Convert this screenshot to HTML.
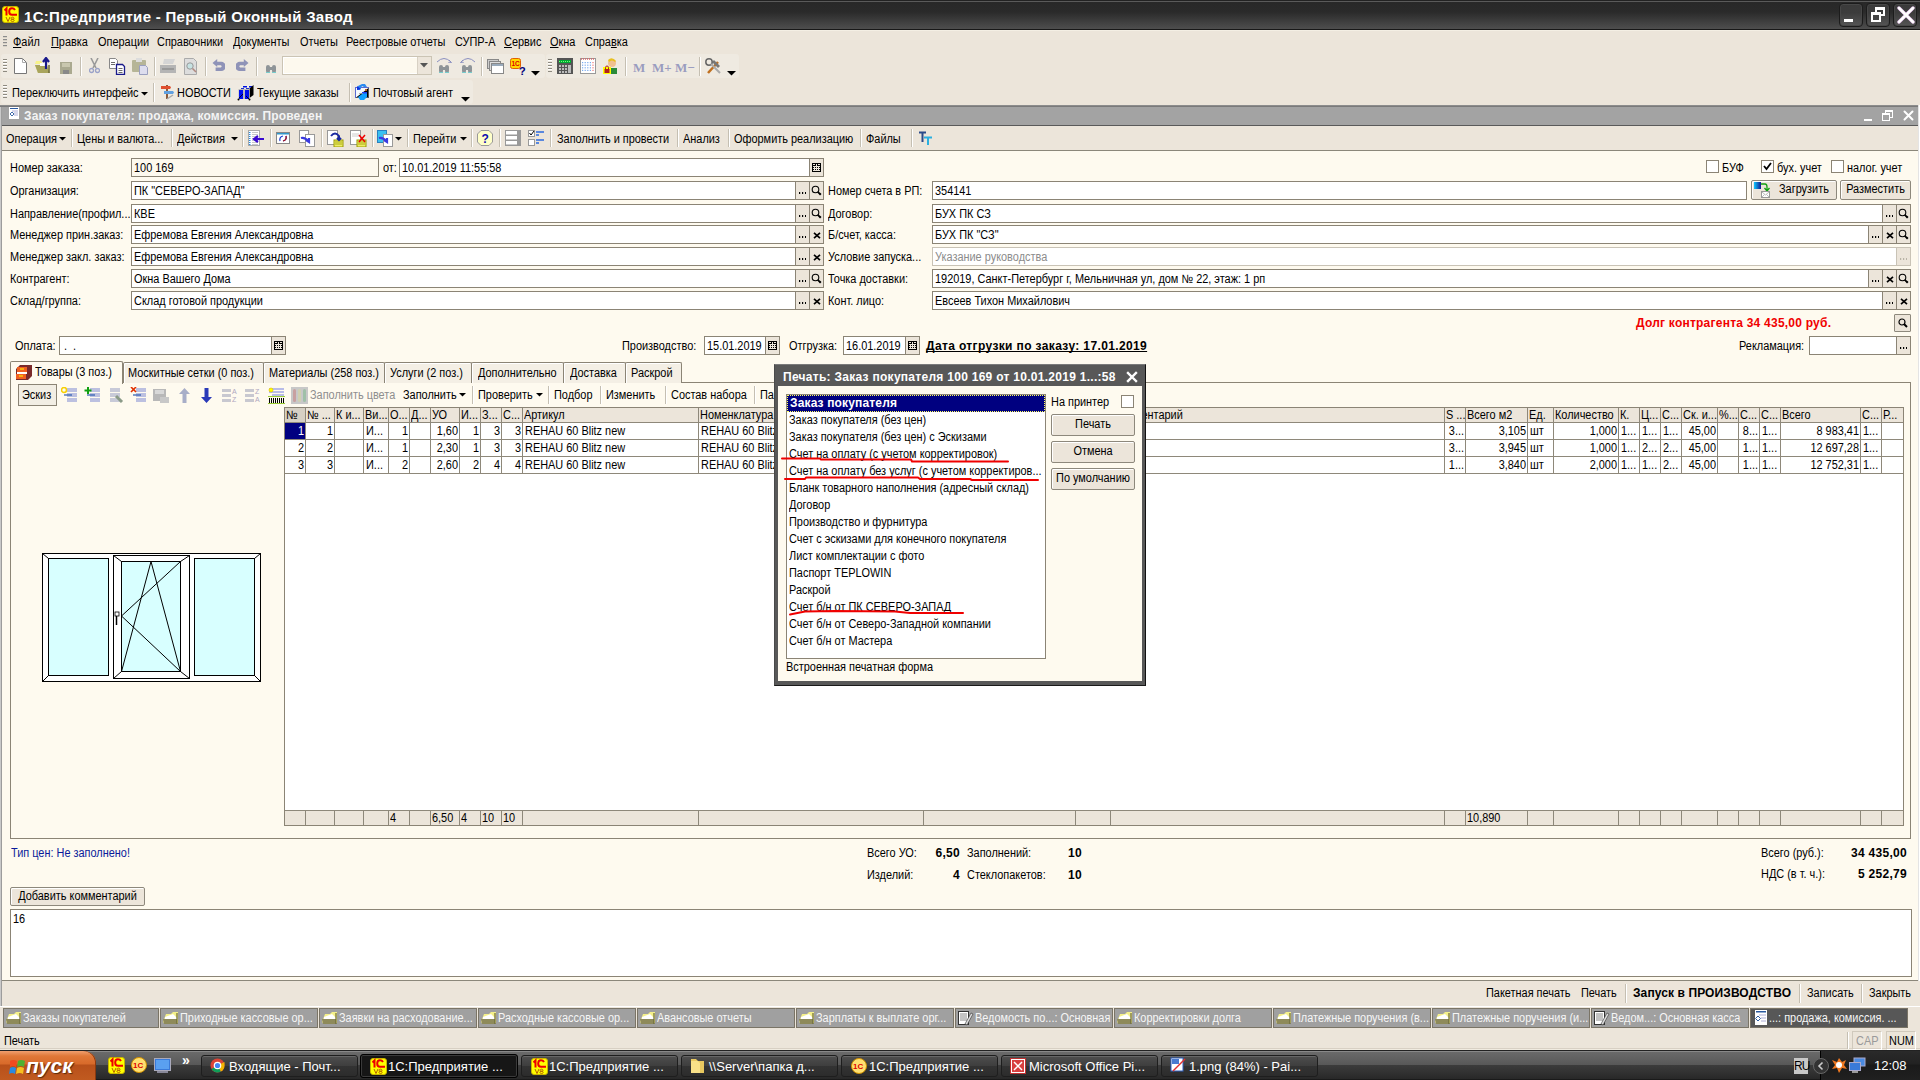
<!DOCTYPE html><html><head><meta charset="utf-8"><style>
*{margin:0;padding:0;box-sizing:border-box}
html,body{width:1920px;height:1080px;overflow:hidden;background:#ECE5DA;font-family:"Liberation Sans", sans-serif;font-size:11px;color:#000}
.a{position:absolute}
.t{position:absolute;white-space:nowrap;line-height:15px;font-size:12px;transform:scaleX(0.91);transform-origin:0 0}
.b{position:absolute;white-space:nowrap;line-height:15px;font-size:12px;font-weight:bold;letter-spacing:0.3px}
.inp{position:absolute;background:#fff;border:1px solid #7f7b70;}
.btn{position:absolute;background:#ECE5DA;border:1px solid #8d897e;border-radius:2px;box-shadow:inset 1px 1px 0 #fff;}
.fb{position:absolute;background:#ECE5DA;border-left:1px solid #a9a59a;top:0;bottom:0;width:14px}
.sep{position:absolute;width:1px;background:#c8c1b4;border-right:1px solid #fff}
u{text-decoration:underline;text-decoration-skip-ink:none}
</style></head><body>
<div class="a" style="left:0px;top:0px;width:1920px;height:30px;background:linear-gradient(#222 0px,#222 1px,#5a5a5a 1px,#5a5a5a 2px,#282828 2px,#2a2a2a 12px,#4e4e4e 29px,#181818 29px)"></div>
<svg class="a" style="left:2px;top:6px" width="17" height="17" viewBox="0 0 17 17">
<rect x="0.5" y="0.5" width="16" height="16" rx="2.5" fill="#ffff00" stroke="#c8b400"/>
<path d="M2.5 4.5L4.5 2.5V9.5" stroke="#ee0000" stroke-width="2" fill="none"/>
<path d="M13 4Q12 2.2 10 2.2Q7.2 2.2 7.2 5.5Q7.2 8.8 10 8.8H15" stroke="#ee0000" stroke-width="2" fill="none"/>
<path d="M4 11L6 15.5L8 11M10.5 11.2A1.5 1.1 0 1 0 10.6 11.2ZM10.5 13.2A1.6 1.2 0 1 0 10.6 13.2Z" stroke="#b05000" stroke-width="0.9" fill="none"/>
</svg>
<div class="t" style="left:24px;top:8px;font-size:15px;line-height:18px;font-weight:bold;letter-spacing:0.3px;color:#fff;transform:none">1С:Предприятие - Первый Оконный Завод</div>
<div class="a" style="left:1839px;top:3px;width:24px;height:24px;border:1px solid #1c1c1c;border-radius:4px;background:linear-gradient(#3a3a3a,#3c3c3c 40%,#555 100%);box-shadow:inset 0 0 0 1px #474747"></div>
<div class="a" style="left:1866px;top:3px;width:24px;height:24px;border:1px solid #1c1c1c;border-radius:4px;background:linear-gradient(#3a3a3a,#3c3c3c 40%,#555 100%);box-shadow:inset 0 0 0 1px #474747"></div>
<div class="a" style="left:1893px;top:3px;width:24px;height:24px;border:1px solid #1c1c1c;border-radius:4px;background:linear-gradient(#3a3a3a,#3c3c3c 40%,#555 100%);box-shadow:inset 0 0 0 1px #474747"></div>
<div class="a" style="left:1844px;top:19px;width:9px;height:3px;background:#fff"></div>
<div class="a" style="left:1875px;top:7px;width:10px;height:9px;border:2px solid #fff;border-top-width:3px"></div>
<div class="a" style="left:1871px;top:12px;width:10px;height:10px;border:2px solid #fff;border-top-width:3px;background:#444"></div>
<svg class="a" style="left:1897px;top:6px" width="18" height="18" viewBox="0 0 18 18"><path d="M2 2L16 16M16 2L2 16" stroke="#e8c8ee" stroke-width="3.4" stroke-linecap="round"/><path d="M2 2L16 16M16 2L2 16" stroke="#fff" stroke-width="2.4" stroke-linecap="round"/></svg>
<div class="a" style="left:0px;top:30px;width:1920px;height:24px;background:linear-gradient(#F4EFE4 0 1px,#ECE5DA 1px)"></div>
<div class="a" style="left:3px;top:36px;width:4px;height:12px;background:repeating-linear-gradient(#8c8c8c 0 1px,#d8d2c6 1px 2px,transparent 2px 3px)"></div>
<div class="t" style="left:13px;top:35px;"><u>Ф</u>айл</div>
<div class="t" style="left:51px;top:35px;"><u>П</u>равка</div>
<div class="t" style="left:98px;top:35px;">Операции</div>
<div class="t" style="left:157px;top:35px;">Справочники</div>
<div class="t" style="left:233px;top:35px;">Документы</div>
<div class="t" style="left:300px;top:35px;">Отчеты</div>
<div class="t" style="left:346px;top:35px;">Реестровые отчеты</div>
<div class="t" style="left:455px;top:35px;">СУПР-А</div>
<div class="t" style="left:504px;top:35px;"><u>С</u>ервис</div>
<div class="t" style="left:550px;top:35px;"><u>О</u>кна</div>
<div class="t" style="left:585px;top:35px;">Спра<u>в</u>ка</div>
<div class="a" style="left:1px;top:54px;width:544px;height:24px;background:#EFEAE1;border-radius:3px"></div>
<div class="a" style="left:546px;top:54px;width:193px;height:24px;background:#EFEAE1;border-radius:3px"></div>
<div class="a" style="left:3px;top:59px;width:4px;height:13px;background:repeating-linear-gradient(#8e8a80 0 1px,#fff 1px 2px,transparent 2px 3px)"></div>
<div class="a" style="left:548px;top:59px;width:4px;height:13px;background:repeating-linear-gradient(#8e8a80 0 1px,#fff 1px 2px,transparent 2px 3px)"></div>
<div class="a" style="left:80px;top:57px;width:1px;height:19px;background:#c5bfb2;box-shadow:1px 0 0 #fff"></div>
<div class="a" style="left:154px;top:57px;width:1px;height:19px;background:#c5bfb2;box-shadow:1px 0 0 #fff"></div>
<div class="a" style="left:205px;top:57px;width:1px;height:19px;background:#c5bfb2;box-shadow:1px 0 0 #fff"></div>
<div class="a" style="left:256px;top:57px;width:1px;height:19px;background:#c5bfb2;box-shadow:1px 0 0 #fff"></div>
<div class="a" style="left:481px;top:57px;width:1px;height:19px;background:#c5bfb2;box-shadow:1px 0 0 #fff"></div>
<div class="a" style="left:625px;top:57px;width:1px;height:19px;background:#c5bfb2;box-shadow:1px 0 0 #fff"></div>
<div class="a" style="left:699px;top:57px;width:1px;height:19px;background:#c5bfb2;box-shadow:1px 0 0 #fff"></div>
<svg class="a" style="left:14px;top:58px;" width="13" height="16" viewBox="0 0 13 16"><path d="M0.5 0.5H8.5L12.5 4.5V15.5H0.5Z" fill="#fff" stroke="#777"/><path d="M8.5 0.5V4.5H12.5" fill="none" stroke="#aaa"/></svg>
<svg class="a" style="left:34px;top:57px;" width="18" height="17" viewBox="0 0 18 17"><path d="M1 8H13L16 16H4Z" fill="#d8d27a"/><path d="M1 8L4 16H15L13 8" fill="#a9a55c"/><path d="M2 4H7L9 7H1Z" fill="#f7f38a"/><rect x="6" y="6" width="7" height="3" fill="#fff"/><path d="M12 12V3M9 5L12 1L15 5" stroke="#1a1a8a" stroke-width="2.2" fill="none"/><path d="M15 8V16" stroke="#6b6838" stroke-width="1.5"/></svg>
<svg class="a" style="left:60px;top:62px;" width="12" height="12" viewBox="0 0 12 12"><rect x="0" y="0" width="12" height="12" fill="#aaa98f"/><rect x="2" y="1" width="8" height="4" fill="#c9c7ae"/><rect x="3" y="8" width="6" height="4" fill="#888"/></svg>
<svg class="a" style="left:89px;top:58px;" width="11" height="16" viewBox="0 0 11 16"><path d="M2 0L7 10M9 0L4 10" stroke="#9a9a9a" stroke-width="1.6"/><circle cx="2.5" cy="12.5" r="2" fill="none" stroke="#9aa2c8" stroke-width="1.3"/><circle cx="8.5" cy="12.5" r="2" fill="none" stroke="#9aa2c8" stroke-width="1.3"/></svg>
<svg class="a" style="left:109px;top:58px;" width="17" height="17" viewBox="0 0 17 17"><path d="M0.5 0.5H6.5L8.5 2.5V10.5H0.5Z" fill="#fff" stroke="#888"/><path d="M7.5 6.5H13.5L15.5 8.5V16.5H7.5Z" fill="#fff" stroke="#1a1a8a" stroke-width="1.3"/><path d="M9.5 10.5H13.5M9.5 12.5H13.5M9.5 14.5H13.5M2 4.5H6M2 6.5H6" stroke="#444" stroke-width="0.8"/></svg>
<svg class="a" style="left:132px;top:58px;" width="17" height="17" viewBox="0 0 17 17"><rect x="0" y="2" width="14" height="12" rx="1" fill="#b6b597"/><rect x="4" y="0" width="6" height="4" fill="#ddd"/><path d="M7.5 7.5H13.5L15.5 9.5V16.5H7.5Z" fill="#dde" stroke="#9a9fbf"/></svg>
<svg class="a" style="left:160px;top:59px;" width="17" height="15" viewBox="0 0 17 15"><path d="M4 0H15L13 5H3Z" fill="#d5d5d5"/><path d="M0 6H16V14H0Z" fill="#b5b5b5"/><rect x="2" y="9" width="12" height="2" fill="#999"/></svg>
<svg class="a" style="left:184px;top:58px;" width="14" height="17" viewBox="0 0 14 17"><path d="M0.5 0.5H9.5L12.5 3.5V16.5H0.5Z" fill="#ddd" stroke="#aaa"/><circle cx="6" cy="8" r="3.2" fill="#c7e2e2" stroke="#999"/><path d="M8.5 10.5L12 14" stroke="#b08a80" stroke-width="1.6"/></svg>
<svg class="a" style="left:212px;top:59px;" width="13" height="15" viewBox="0 0 13 15"><path d="M1 4L5 0V2.5H9Q12 2.5 12 6.5Q12 10 9 10H3V14H9Q13 14 13 7.5V6Q13 0 9 0H5Z" fill="none"/><path d="M0 4.5L5 0.5V3H8.5A3.8 3.8 0 0 1 8.5 10.5H3.5V14.5H8.5A7.5 7.5 0 0 0 8.5 -0.5" fill="none"/><path d="M0.5 4L5.2 0V2.8H9.2A4 4 0 0 1 9.2 12H3.6V8.5H8.8A1.2 1.2 0 0 0 8.8 6.2H5.2V8Z" fill="#8f93b8"/></svg>
<svg class="a" style="left:236px;top:59px;" width="13" height="15" viewBox="0 0 13 15"><path d="M12.5 4L7.8 0V2.8H3.8A4 4 0 0 0 3.8 12H9.4V8.5H4.2A1.2 1.2 0 0 1 4.2 6.2H7.8V8Z" fill="#8f93b8"/></svg>
<svg class="a" style="left:265px;top:63px;" width="12" height="10" viewBox="0 0 12 10"><rect x="1" y="2" width="4" height="8" rx="2" fill="#8e9498"/><rect x="7" y="2" width="4" height="8" rx="2" fill="#8e9498"/><rect x="4" y="4" width="4" height="3" fill="#8e9498"/><rect x="1" y="9" width="4" height="1" fill="#7cc"/><rect x="7" y="9" width="4" height="1" fill="#7cc"/></svg>
<div class="a" style="left:282px;top:56px;width:150px;height:19px;background:#fdf9ee;border:1px solid #cbc4b4;box-shadow:inset 1px 1px 0 #fff,inset -1px -1px 0 #fff"></div>
<div class="a" style="left:417px;top:57px;width:14px;height:17px;background:#ece5da;border-left:1px solid #d8d1c4"></div>
<svg class="a" style="left:420px;top:63px;" width="8" height="5" viewBox="0 0 8 5"><path d="M0 0H8L4 4.5Z" fill="#555"/></svg>
<svg class="a" style="left:438px;top:63px;" width="12" height="10" viewBox="0 0 12 10"><rect x="1" y="2" width="4" height="8" rx="2" fill="#8e9498"/><rect x="7" y="2" width="4" height="8" rx="2" fill="#8e9498"/><rect x="4" y="4" width="4" height="3" fill="#8e9498"/><rect x="1" y="9" width="4" height="1" fill="#7cc"/><rect x="7" y="9" width="4" height="1" fill="#7cc"/></svg>
<svg class="a" style="left:461px;top:63px;" width="12" height="10" viewBox="0 0 12 10"><rect x="1" y="2" width="4" height="8" rx="2" fill="#8e9498"/><rect x="7" y="2" width="4" height="8" rx="2" fill="#8e9498"/><rect x="4" y="4" width="4" height="3" fill="#8e9498"/><rect x="1" y="9" width="4" height="1" fill="#7cc"/><rect x="7" y="9" width="4" height="1" fill="#7cc"/></svg>
<svg class="a" style="left:436px;top:57px;" width="17" height="6" viewBox="0 0 17 6"><path d="M1 5Q8 -2 15 5M13 3L15.5 5.5L12 6" fill="none" stroke="#8a8fc0" stroke-width="1"/></svg>
<svg class="a" style="left:459px;top:57px;" width="17" height="6" viewBox="0 0 17 6"><path d="M16 5Q9 -2 2 5M4 3L1.5 5.5L5 6" fill="none" stroke="#8a8fc0" stroke-width="1"/></svg>
<svg class="a" style="left:487px;top:59px;" width="17" height="15" viewBox="0 0 17 15"><rect x="0.5" y="0.5" width="11" height="9" fill="#ccc" stroke="#888"/><rect x="2.5" y="2.5" width="11" height="9" fill="#ddd" stroke="#888"/><rect x="4.5" y="4.5" width="12" height="10" fill="#fff" stroke="#888"/><rect x="5" y="5" width="11" height="2" fill="#9ab"/></svg>
<svg class="a" style="left:510px;top:58px;" width="17" height="17" viewBox="0 0 17 17"><rect x="0.5" y="0.5" width="10" height="10" rx="2" fill="#ffd800" stroke="#e06000"/><text x="1.5" y="8" font-size="6.5" font-weight="bold" fill="#d00" font-family="Liberation Sans">1C</text><text x="9" y="16.5" font-size="11" font-weight="bold" fill="#00007a" font-family="Liberation Sans">?</text></svg>
<svg class="a" style="left:531px;top:71px;" width="9" height="5" viewBox="0 0 9 5"><path d="M0 0H9L4.5 4.5Z" fill="#000"/></svg>
<svg class="a" style="left:727px;top:71px;" width="9" height="5" viewBox="0 0 9 5"><path d="M0 0H9L4.5 4.5Z" fill="#000"/></svg>
<svg class="a" style="left:557px;top:58px;" width="17" height="16" viewBox="0 0 17 16"><rect x="0" y="0" width="16" height="16" fill="#555"/><rect x="2" y="2" width="12" height="3" fill="#0a3"/><path d="M2 3.5H14" stroke="#7f7" stroke-width="1" stroke-dasharray="1 1"/><rect x="2" y="7" width="2" height="2" fill="#bbb"/><rect x="2" y="10" width="2" height="2" fill="#bbb"/><rect x="2" y="13" width="2" height="2" fill="#bbb"/><rect x="5" y="7" width="2" height="2" fill="#bbb"/><rect x="5" y="10" width="2" height="2" fill="#bbb"/><rect x="5" y="13" width="2" height="2" fill="#bbb"/><rect x="8" y="7" width="2" height="2" fill="#bbb"/><rect x="8" y="10" width="2" height="2" fill="#bbb"/><rect x="8" y="13" width="2" height="2" fill="#bbb"/><rect x="11" y="7" width="3" height="8" fill="#bbb"/></svg>
<svg class="a" style="left:580px;top:58px;" width="17" height="16" viewBox="0 0 17 16"><rect x="0.5" y="0.5" width="15" height="15" fill="#fff" stroke="#999"/><path d="M1 1H15" stroke="#d66" stroke-width="1.5" stroke-dasharray="1 1"/><rect x="2.0" y="4.0" width="1.2" height="1.2" fill="#7ae"/><rect x="2.0" y="6.6" width="1.2" height="1.2" fill="#7ae"/><rect x="2.0" y="9.2" width="1.2" height="1.2" fill="#7ae"/><rect x="2.0" y="11.8" width="1.2" height="1.2" fill="#7ae"/><rect x="4.6" y="4.0" width="1.2" height="1.2" fill="#7ae"/><rect x="4.6" y="6.6" width="1.2" height="1.2" fill="#7ae"/><rect x="4.6" y="9.2" width="1.2" height="1.2" fill="#7ae"/><rect x="4.6" y="11.8" width="1.2" height="1.2" fill="#7ae"/><rect x="7.2" y="4.0" width="1.2" height="1.2" fill="#7ae"/><rect x="7.2" y="6.6" width="1.2" height="1.2" fill="#7ae"/><rect x="7.2" y="9.2" width="1.2" height="1.2" fill="#7ae"/><rect x="7.2" y="11.8" width="1.2" height="1.2" fill="#7ae"/><rect x="9.8" y="4.0" width="1.2" height="1.2" fill="#7ae"/><rect x="9.8" y="6.6" width="1.2" height="1.2" fill="#7ae"/><rect x="9.8" y="9.2" width="1.2" height="1.2" fill="#7ae"/><rect x="9.8" y="11.8" width="1.2" height="1.2" fill="#7ae"/><rect x="12.4" y="4.0" width="1.2" height="1.2" fill="#e77"/><rect x="12.4" y="6.6" width="1.2" height="1.2" fill="#e77"/><rect x="12.4" y="9.2" width="1.2" height="1.2" fill="#e77"/><rect x="12.4" y="11.8" width="1.2" height="1.2" fill="#e77"/></svg>
<svg class="a" style="left:603px;top:58px;" width="15" height="16" viewBox="0 0 15 16"><circle cx="9" cy="5" r="4" fill="#f0c090"/><path d="M5 2Q9 -2 13 3L12 4Q9 1 6 4Z" fill="#e8c020"/><path d="M7 10H14V16H7Z" fill="#2a8a3a"/><rect x="0" y="9" width="8" height="7" fill="#ff0"/><rect x="1.5" y="11" width="5" height="4" fill="#b02020"/><path d="M2.5 11V9.5A1.5 1.5 0 0 1 5.5 9.5V11" stroke="#b02020" fill="none"/></svg>
<div class="t" style="left:633px;top:60px;font-family:Liberation Serif;font-weight:bold;font-size:13px;color:#9a9cbf;transform:none">M</div>
<div class="t" style="left:652px;top:60px;font-family:Liberation Serif;font-weight:bold;font-size:13px;color:#9a9cbf;transform:none">M+</div>
<div class="t" style="left:675px;top:60px;font-family:Liberation Serif;font-weight:bold;font-size:13px;color:#9a9cbf;transform:none">M−</div>
<svg class="a" style="left:705px;top:58px;" width="17" height="16" viewBox="0 0 17 16"><path d="M3 15L13 4" stroke="#c07020" stroke-width="2.5"/><path d="M9 2L15 8L13 10L7 4Z" fill="#777"/><circle cx="4" cy="4" r="3.2" fill="none" stroke="#666" stroke-width="1.5"/><path d="M6 6L15 15" stroke="#aaa" stroke-width="2"/></svg>
<div class="a" style="left:1px;top:80px;width:472px;height:24px;background:#EFEAE1;border-radius:3px"></div>
<div class="a" style="left:3px;top:85px;width:4px;height:13px;background:repeating-linear-gradient(#8e8a80 0 1px,#fff 1px 2px,transparent 2px 3px)"></div>
<div class="t" style="left:12px;top:86px;">Переключить интерфейс</div>
<svg class="a" style="left:141px;top:92px;" width="7" height="4" viewBox="0 0 7 4"><path d="M0 0H7L3.5 3.5Z" fill="#000"/></svg>
<div class="a" style="left:153px;top:83px;width:1px;height:19px;background:#c5bfb2;box-shadow:1px 0 0 #fff"></div>
<svg class="a" style="left:160px;top:83px;" width="15" height="17" viewBox="0 0 15 17"><path d="M7 2V16" stroke="#8a5a3a" stroke-width="2"/><path d="M1 3H10L11 4.5L10 6H1Z" fill="#e05030"/><path d="M4 8H13L14 9.5L13 11H4Z" fill="#60a0e0"/><path d="M7 16L13 12" stroke="#aaa" stroke-width="1.5"/></svg>
<div class="t" style="left:177px;top:86px;">НОВОСТИ</div>
<svg class="a" style="left:236px;top:80px;" width="20" height="22" viewBox="0 0 20 22"><path d="M2.5 8.5L6.5 5H17L13.5 8.5Z" fill="#f0f0e8"/><rect x="7" y="6" width="4" height="1.5" fill="#0010e0"/><rect x="13" y="6" width="3" height="1.5" fill="#0010e0"/><rect x="5" y="8" width="3" height="1" fill="#2030d0"/><rect x="10" y="8" width="3" height="1" fill="#2030d0"/><path d="M13.5 8.5L17.5 5V15L13.5 18Z" fill="#000"/><rect x="2.5" y="9" width="11" height="10" fill="#bbb"/><rect x="3" y="10" width="4" height="9" fill="#0010f0"/><rect x="9" y="10" width="4" height="9" fill="#0010f0"/><path d="M3 18L7 14M13 19L10 16" stroke="#000" stroke-width="0.8"/><circle cx="2.5" cy="19.5" r="1" fill="#000"/><circle cx="13.5" cy="19.5" r="1" fill="#000"/></svg>
<div class="t" style="left:257px;top:86px;">Текущие заказы</div>
<div class="a" style="left:349px;top:83px;width:1px;height:19px;background:#c5bfb2;box-shadow:1px 0 0 #fff"></div>
<svg class="a" style="left:352px;top:80px;" width="20" height="22" viewBox="0 0 20 22"><rect x="3.5" y="7.5" width="13" height="10" fill="#f4faff" stroke="#5a6ad0"/><path d="M16.5 8V17.5H4" stroke="#555" stroke-width="1"/><rect x="13" y="9" width="2" height="2" fill="#c0602a"/><path d="M6 6L10 4H13L15 7H12L10 6L8 10L5 10Z" fill="#2a8af0"/><path d="M5 10V6L9 9Z" fill="#1030e0"/><path d="M10 12H15V17L12 20H8L6 17L10 14Z" fill="#10a0ff"/><path d="M10 12H15V13.5H10Z" fill="#2040f0"/><rect x="7" y="13" width="4" height="0.8" fill="#999"/></svg>
<div class="t" style="left:373px;top:86px;">Почтовый агент</div>
<svg class="a" style="left:461px;top:97px;" width="9" height="5" viewBox="0 0 9 5"><path d="M0 0H9L4.5 4.5Z" fill="#000"/></svg>
<div class="a" style="left:0px;top:105px;width:2px;height:901px;background:linear-gradient(90deg,#c9c9c9 0 1px,#9c9c9c 1px)"></div>
<div class="a" style="left:0px;top:105px;width:1918px;height:2px;background:linear-gradient(#8c8c8c 0 1px,#7a7a7a 1px)"></div>
<div class="a" style="left:1918px;top:105px;width:1px;height:876px;background:#e4e4e4"></div>
<div class="a" style="left:1919px;top:105px;width:1px;height:876px;background:#fff"></div>
<div class="a" style="left:2px;top:107px;width:1916px;height:18px;background:#a3a3a3"></div>
<div class="a" style="left:2px;top:125px;width:1916px;height:1px;background:#5a5a5a"></div>
<svg class="a" style="left:9px;top:107px;" width="10" height="12" viewBox="0 0 10 12"><rect x="0" y="0" width="10" height="12" fill="#fff"/><rect x="1" y="1" width="8" height="1" fill="#2a5aa0"/><path d="M3 4H9M5 6H9M5 8H9" stroke="#99c" stroke-width="0.8"/><path d="M3 5L5 7L3 9L1 7Z" fill="none" stroke="#2a5aa0" stroke-width="0.9"/></svg>
<div class="t" style="left:24px;top:109px;font-weight:bold;font-size:12px;letter-spacing:0.13px;color:#f4f4f4;line-height:14px;transform:none">Заказ покупателя: продажа, комиссия. Проведен</div>
<div class="a" style="left:1864px;top:119px;width:8px;height:2px;background:#fff"></div>
<div class="a" style="left:1885px;top:110px;width:8px;height:8px;border:1px solid #fff;border-top-width:2px"></div>
<div class="a" style="left:1882px;top:113px;width:8px;height:8px;border:1px solid #fff;border-top-width:2px;background:#a3a3a3"></div>
<svg class="a" style="left:1903px;top:110px;" width="11" height="11" viewBox="0 0 11 11"><path d="M1.5 1.5L9.5 9.5M9.5 1.5L1.5 9.5" stroke="#fff" stroke-width="2" stroke-linecap="round"/></svg>
<div class="a" style="left:2px;top:126px;width:1916px;height:24px;background:#ECE5DA"></div>
<div class="a" style="left:2px;top:150px;width:1916px;height:1px;background:#8b877a"></div>
<div class="a" style="left:71px;top:129px;width:1px;height:18px;background:#c5bfb2;box-shadow:1px 0 0 #fff"></div>
<div class="a" style="left:171px;top:129px;width:1px;height:18px;background:#c5bfb2;box-shadow:1px 0 0 #fff"></div>
<div class="a" style="left:242px;top:129px;width:1px;height:18px;background:#c5bfb2;box-shadow:1px 0 0 #fff"></div>
<div class="a" style="left:270px;top:129px;width:1px;height:18px;background:#c5bfb2;box-shadow:1px 0 0 #fff"></div>
<div class="a" style="left:321px;top:129px;width:1px;height:18px;background:#c5bfb2;box-shadow:1px 0 0 #fff"></div>
<div class="a" style="left:372px;top:129px;width:1px;height:18px;background:#c5bfb2;box-shadow:1px 0 0 #fff"></div>
<div class="a" style="left:407px;top:129px;width:1px;height:18px;background:#c5bfb2;box-shadow:1px 0 0 #fff"></div>
<div class="a" style="left:471px;top:129px;width:1px;height:18px;background:#c5bfb2;box-shadow:1px 0 0 #fff"></div>
<div class="a" style="left:499px;top:129px;width:1px;height:18px;background:#c5bfb2;box-shadow:1px 0 0 #fff"></div>
<div class="a" style="left:550px;top:129px;width:1px;height:18px;background:#c5bfb2;box-shadow:1px 0 0 #fff"></div>
<div class="a" style="left:677px;top:129px;width:1px;height:18px;background:#c5bfb2;box-shadow:1px 0 0 #fff"></div>
<div class="a" style="left:728px;top:129px;width:1px;height:18px;background:#c5bfb2;box-shadow:1px 0 0 #fff"></div>
<div class="a" style="left:860px;top:129px;width:1px;height:18px;background:#c5bfb2;box-shadow:1px 0 0 #fff"></div>
<div class="a" style="left:911px;top:129px;width:1px;height:18px;background:#c5bfb2;box-shadow:1px 0 0 #fff"></div>
<div class="t" style="left:6px;top:132px;">Операция</div>
<svg class="a" style="left:59px;top:137px;" width="7" height="4" viewBox="0 0 7 4"><path d="M0 0H7L3.5 3.5Z" fill="#000"/></svg>
<div class="t" style="left:77px;top:132px;">Цены и валюта...</div>
<div class="t" style="left:177px;top:132px;">Действия</div>
<svg class="a" style="left:231px;top:137px;" width="7" height="4" viewBox="0 0 7 4"><path d="M0 0H7L3.5 3.5Z" fill="#000"/></svg>
<svg class="a" style="left:248px;top:130px;" width="17" height="17" viewBox="0 0 17 17"><rect x="0.5" y="0.5" width="11" height="15" fill="#fff" stroke="#aaa"/><rect x="1" y="2" width="1.5" height="1" fill="#2a8ae0"/><rect x="4" y="2" width="6" height="0.8" fill="#bbb"/><rect x="1" y="4" width="1.5" height="1" fill="#2a8ae0"/><rect x="4" y="4" width="6" height="0.8" fill="#bbb"/><rect x="1" y="6" width="1.5" height="1" fill="#2a8ae0"/><rect x="4" y="6" width="6" height="0.8" fill="#bbb"/><rect x="1" y="8" width="1.5" height="1" fill="#2a8ae0"/><rect x="4" y="8" width="6" height="0.8" fill="#bbb"/><rect x="1" y="10" width="1.5" height="1" fill="#2a8ae0"/><rect x="4" y="10" width="6" height="0.8" fill="#bbb"/><rect x="1" y="12" width="1.5" height="1" fill="#2a8ae0"/><rect x="4" y="12" width="6" height="0.8" fill="#bbb"/><rect x="1" y="14" width="1.5" height="1" fill="#2a8ae0"/><rect x="4" y="14" width="6" height="0.8" fill="#bbb"/><path d="M16 9H7M10 6L6 9L10 12" stroke="#3a0ad0" stroke-width="2.2" fill="none"/></svg>
<svg class="a" style="left:276px;top:132px;" width="14" height="12" viewBox="0 0 14 12"><rect x="0.5" y="0.5" width="13" height="11" fill="#fff" stroke="#888"/><rect x="1" y="1" width="12" height="1.5" fill="#39c"/><path d="M4 9Q3 5 7 4M10 4Q11 8 7 9" stroke="#1a3ad0" stroke-width="1.2" fill="none"/><path d="M10 4Q11 8 7 9" stroke="#b01010" stroke-width="1.2" fill="none"/></svg>
<svg class="a" style="left:299px;top:130px;" width="17" height="17" viewBox="0 0 17 17"><rect x="0.5" y="0.5" width="9" height="12" fill="#fff" stroke="#999"/><rect x="6.5" y="4.5" width="9" height="12" fill="#fff" stroke="#999"/><path d="M2 8Q6 7 9 11M7 10L10 12L10 8" stroke="#3a3ae0" stroke-width="2.2" fill="none"/></svg>
<svg class="a" style="left:327px;top:130px;" width="17" height="17" viewBox="0 0 17 17"><rect x="0.5" y="0.5" width="10" height="14" fill="#fff" stroke="#999"/><rect x="7" y="10" width="9" height="7" fill="#ee6" stroke="#990"/><path d="M8 12H15M8 14H15" stroke="#990" stroke-width="0.8"/><path d="M4 6Q8 1 12 6V10M10 8L12 10L14 8" stroke="#1a2aa0" stroke-width="2" fill="none"/></svg>
<svg class="a" style="left:350px;top:130px;" width="17" height="17" viewBox="0 0 17 17"><rect x="0.5" y="0.5" width="10" height="14" fill="#fff" stroke="#999"/><path d="M2 4H9M2 6H9" stroke="#ccc"/><rect x="7" y="10" width="9" height="7" fill="#ee6" stroke="#990"/><path d="M8 12H15M8 14H15" stroke="#990" stroke-width="0.8"/><path d="M9 5L15 12M15 5L9 12" stroke="#e00" stroke-width="1.5"/></svg>
<svg class="a" style="left:377px;top:130px;" width="17" height="17" viewBox="0 0 17 17"><rect x="0.5" y="0.5" width="9" height="12" fill="#3ac0f0" stroke="#2a80c0"/><rect x="6.5" y="4.5" width="9" height="12" fill="#fff" stroke="#999"/><path d="M2 8Q6 7 9 11M7 10L10 12L10 8" stroke="#3a3ae0" stroke-width="2.2" fill="none"/></svg>
<svg class="a" style="left:395px;top:137px;" width="7" height="4" viewBox="0 0 7 4"><path d="M0 0H7L3.5 3.5Z" fill="#000"/></svg>
<div class="t" style="left:413px;top:132px;">Перейти</div>
<svg class="a" style="left:460px;top:137px;" width="7" height="4" viewBox="0 0 7 4"><path d="M0 0H7L3.5 3.5Z" fill="#000"/></svg>
<svg class="a" style="left:477px;top:130px;" width="16" height="16" viewBox="0 0 16 16"><path d="M4 0.5H12L15.5 4V12L12 15.5H4L0.5 12V4Z" fill="#ffffc8" stroke="#999"/><text x="4.5" y="13" font-size="12" font-weight="bold" fill="#1010b0" font-family="Liberation Sans">?</text></svg>
<svg class="a" style="left:505px;top:130px;" width="16" height="16" viewBox="0 0 16 16"><rect x="0" y="0" width="16" height="16" fill="#999"/><rect x="1" y="1" width="11" height="3.5" fill="#fff"/><rect x="1" y="6" width="11" height="3.5" fill="#fff"/><rect x="1" y="11" width="11" height="3.5" fill="#fff"/></svg>
<svg class="a" style="left:528px;top:130px;" width="17" height="16" viewBox="0 0 17 16"><rect x="0.5" y="0.5" width="6" height="6" fill="#fff" stroke="#999"/><path d="M1.5 3L3 5L6 1" stroke="#000" fill="none"/><rect x="0.5" y="9.5" width="6" height="6" fill="#fff" stroke="#999"/><path d="M8 2H16M8 5H11M8 10H16M8 13H11" stroke="#2a6ae0" stroke-width="1.5"/></svg>
<div class="t" style="left:557px;top:132px;">Заполнить и провести</div>
<div class="t" style="left:683px;top:132px;">Анализ</div>
<div class="t" style="left:734px;top:132px;">Оформить реализацию</div>
<div class="t" style="left:866px;top:132px;">Файлы</div>
<svg class="a" style="left:918px;top:131px;" width="15" height="15" viewBox="0 0 15 15"><path d="M1 1.5H8M4.5 1.5V11" stroke="#2a4a8a" stroke-width="2"/><path d="M6 6.5H14M10 6.5V14" stroke="#2ab0e0" stroke-width="2"/></svg>
<div class="a" style="left:2px;top:151px;width:1916px;height:830px;background:#FEFAEF"></div>
<div class="t" style="left:10px;top:161px;">Номер заказа:</div>
<div class="a" style="left:131px;top:158px;width:248px;height:19px;background:#fff;border:1px solid #8b8475"></div>
<div class="t" style="left:134px;top:161px;">100 169</div>
<div class="a" style="left:132px;top:159px;width:246px;height:17px;background:#FDF9EE"></div>
<div class="t" style="left:134px;top:161px;">100 169</div>
<div class="t" style="left:383px;top:161px;">от:</div>
<div class="a" style="left:399px;top:158px;width:425px;height:19px;background:#fff;border:1px solid #8b8475"></div>
<div class="a" style="left:809px;top:158px;width:15px;height:19px;background:#ECE5DA;border:1px solid #8b8475"></div>
<svg class="a" style="left:812px;top:163px;" width="9" height="9" viewBox="0 0 9 9"><g fill="#000" shape-rendering="crispEdges"><rect x="0" y="0" width="1" height="1"/><rect x="1" y="0" width="1" height="1"/><rect x="2" y="0" width="1" height="1"/><rect x="3" y="0" width="1" height="1"/><rect x="4" y="0" width="1" height="1"/><rect x="5" y="0" width="1" height="1"/><rect x="6" y="0" width="1" height="1"/><rect x="7" y="0" width="1" height="1"/><rect x="8" y="0" width="1" height="1"/><rect x="0" y="1" width="1" height="1"/><rect x="3" y="1" width="1" height="1"/><rect x="5" y="1" width="1" height="1"/><rect x="8" y="1" width="1" height="1"/><rect x="0" y="2" width="1" height="1"/><rect x="1" y="2" width="1" height="1"/><rect x="2" y="2" width="1" height="1"/><rect x="3" y="2" width="1" height="1"/><rect x="5" y="2" width="1" height="1"/><rect x="6" y="2" width="1" height="1"/><rect x="7" y="2" width="1" height="1"/><rect x="8" y="2" width="1" height="1"/><rect x="0" y="3" width="1" height="1"/><rect x="8" y="3" width="1" height="1"/><rect x="0" y="4" width="1" height="1"/><rect x="1" y="4" width="1" height="1"/><rect x="3" y="4" width="1" height="1"/><rect x="5" y="4" width="1" height="1"/><rect x="7" y="4" width="1" height="1"/><rect x="8" y="4" width="1" height="1"/><rect x="0" y="5" width="1" height="1"/><rect x="8" y="5" width="1" height="1"/><rect x="0" y="6" width="1" height="1"/><rect x="1" y="6" width="1" height="1"/><rect x="3" y="6" width="1" height="1"/><rect x="5" y="6" width="1" height="1"/><rect x="7" y="6" width="1" height="1"/><rect x="8" y="6" width="1" height="1"/><rect x="0" y="7" width="1" height="1"/><rect x="8" y="7" width="1" height="1"/><rect x="0" y="8" width="1" height="1"/><rect x="1" y="8" width="1" height="1"/><rect x="2" y="8" width="1" height="1"/><rect x="3" y="8" width="1" height="1"/><rect x="4" y="8" width="1" height="1"/><rect x="5" y="8" width="1" height="1"/><rect x="6" y="8" width="1" height="1"/><rect x="7" y="8" width="1" height="1"/><rect x="8" y="8" width="1" height="1"/></g></svg>
<div class="t" style="left:402px;top:161px;">10.01.2019 11:55:58</div>
<div class="t" style="left:10px;top:184px;">Организация:</div>
<div class="a" style="left:131px;top:181px;width:693px;height:19px;background:#fff;border:1px solid #8b8475"></div>
<div class="a" style="left:809px;top:181px;width:15px;height:19px;background:#ECE5DA;border:1px solid #8b8475"></div>
<svg class="a" style="left:811px;top:185px;" width="12" height="12" viewBox="0 0 12 12"><circle cx="4.5" cy="4.5" r="3.3" fill="none" stroke="#000" stroke-width="1.1"/><path d="M6.8 6.8L9.6 9.6M8.4 9.9L9.9 8.4" stroke="#000" stroke-width="1.8"/></svg>
<div class="a" style="left:795px;top:181px;width:15px;height:19px;background:#ECE5DA;border:1px solid #8b8475"></div>
<svg class="a" style="left:799px;top:192px;" width="7" height="2" viewBox="0 0 7 2"><rect x="0" y="0" width="1.2" height="2" fill="#000"/><rect x="3" y="0" width="1.2" height="2" fill="#000"/><rect x="6" y="0" width="1.2" height="2" fill="#000"/></svg>
<div class="t" style="left:134px;top:184px;">ПК "СЕВЕРО-ЗАПАД"</div>
<div class="t" style="left:10px;top:207px;">Направление(профил...</div>
<div class="a" style="left:131px;top:204px;width:693px;height:19px;background:#fff;border:1px solid #8b8475"></div>
<div class="a" style="left:809px;top:204px;width:15px;height:19px;background:#ECE5DA;border:1px solid #8b8475"></div>
<svg class="a" style="left:811px;top:208px;" width="12" height="12" viewBox="0 0 12 12"><circle cx="4.5" cy="4.5" r="3.3" fill="none" stroke="#000" stroke-width="1.1"/><path d="M6.8 6.8L9.6 9.6M8.4 9.9L9.9 8.4" stroke="#000" stroke-width="1.8"/></svg>
<div class="a" style="left:795px;top:204px;width:15px;height:19px;background:#ECE5DA;border:1px solid #8b8475"></div>
<svg class="a" style="left:799px;top:215px;" width="7" height="2" viewBox="0 0 7 2"><rect x="0" y="0" width="1.2" height="2" fill="#000"/><rect x="3" y="0" width="1.2" height="2" fill="#000"/><rect x="6" y="0" width="1.2" height="2" fill="#000"/></svg>
<div class="t" style="left:134px;top:207px;">КВЕ</div>
<div class="t" style="left:10px;top:228px;">Менеджер прин.заказ:</div>
<div class="a" style="left:131px;top:225px;width:693px;height:19px;background:#fff;border:1px solid #8b8475"></div>
<div class="a" style="left:809px;top:225px;width:15px;height:19px;background:#ECE5DA;border:1px solid #8b8475"></div>
<svg class="a" style="left:813px;top:232px;" width="8" height="7" viewBox="0 0 8 7"><path d="M1 0.8L7 6.2M7 0.8L1 6.2" stroke="#000" stroke-width="1.7"/></svg>
<div class="a" style="left:795px;top:225px;width:15px;height:19px;background:#ECE5DA;border:1px solid #8b8475"></div>
<svg class="a" style="left:799px;top:236px;" width="7" height="2" viewBox="0 0 7 2"><rect x="0" y="0" width="1.2" height="2" fill="#000"/><rect x="3" y="0" width="1.2" height="2" fill="#000"/><rect x="6" y="0" width="1.2" height="2" fill="#000"/></svg>
<div class="t" style="left:134px;top:228px;">Ефремова Евгения Александровна</div>
<div class="t" style="left:10px;top:250px;">Менеджер закл. заказ:</div>
<div class="a" style="left:131px;top:247px;width:693px;height:19px;background:#fff;border:1px solid #8b8475"></div>
<div class="a" style="left:809px;top:247px;width:15px;height:19px;background:#ECE5DA;border:1px solid #8b8475"></div>
<svg class="a" style="left:813px;top:254px;" width="8" height="7" viewBox="0 0 8 7"><path d="M1 0.8L7 6.2M7 0.8L1 6.2" stroke="#000" stroke-width="1.7"/></svg>
<div class="a" style="left:795px;top:247px;width:15px;height:19px;background:#ECE5DA;border:1px solid #8b8475"></div>
<svg class="a" style="left:799px;top:258px;" width="7" height="2" viewBox="0 0 7 2"><rect x="0" y="0" width="1.2" height="2" fill="#000"/><rect x="3" y="0" width="1.2" height="2" fill="#000"/><rect x="6" y="0" width="1.2" height="2" fill="#000"/></svg>
<div class="t" style="left:134px;top:250px;">Ефремова Евгения Александровна</div>
<div class="t" style="left:10px;top:272px;">Контрагент:</div>
<div class="a" style="left:131px;top:269px;width:693px;height:19px;background:#fff;border:1px solid #8b8475"></div>
<div class="a" style="left:809px;top:269px;width:15px;height:19px;background:#ECE5DA;border:1px solid #8b8475"></div>
<svg class="a" style="left:811px;top:273px;" width="12" height="12" viewBox="0 0 12 12"><circle cx="4.5" cy="4.5" r="3.3" fill="none" stroke="#000" stroke-width="1.1"/><path d="M6.8 6.8L9.6 9.6M8.4 9.9L9.9 8.4" stroke="#000" stroke-width="1.8"/></svg>
<div class="a" style="left:795px;top:269px;width:15px;height:19px;background:#ECE5DA;border:1px solid #8b8475"></div>
<svg class="a" style="left:799px;top:280px;" width="7" height="2" viewBox="0 0 7 2"><rect x="0" y="0" width="1.2" height="2" fill="#000"/><rect x="3" y="0" width="1.2" height="2" fill="#000"/><rect x="6" y="0" width="1.2" height="2" fill="#000"/></svg>
<div class="t" style="left:134px;top:272px;">Окна Вашего Дома</div>
<div class="t" style="left:10px;top:294px;">Склад/группа:</div>
<div class="a" style="left:131px;top:291px;width:693px;height:19px;background:#fff;border:1px solid #8b8475"></div>
<div class="a" style="left:809px;top:291px;width:15px;height:19px;background:#ECE5DA;border:1px solid #8b8475"></div>
<svg class="a" style="left:813px;top:298px;" width="8" height="7" viewBox="0 0 8 7"><path d="M1 0.8L7 6.2M7 0.8L1 6.2" stroke="#000" stroke-width="1.7"/></svg>
<div class="a" style="left:795px;top:291px;width:15px;height:19px;background:#ECE5DA;border:1px solid #8b8475"></div>
<svg class="a" style="left:799px;top:302px;" width="7" height="2" viewBox="0 0 7 2"><rect x="0" y="0" width="1.2" height="2" fill="#000"/><rect x="3" y="0" width="1.2" height="2" fill="#000"/><rect x="6" y="0" width="1.2" height="2" fill="#000"/></svg>
<div class="t" style="left:134px;top:294px;">Склад готовой продукции</div>
<div class="t" style="left:828px;top:184px;">Номер счета в РП:</div>
<div class="a" style="left:932px;top:181px;width:815px;height:19px;background:#fff;border:1px solid #8b8475"></div>
<div class="t" style="left:935px;top:184px;">354141</div>
<div class="t" style="left:828px;top:207px;">Договор:</div>
<div class="a" style="left:932px;top:204px;width:979px;height:19px;background:#fff;border:1px solid #8b8475"></div>
<div class="a" style="left:1896px;top:204px;width:15px;height:19px;background:#ECE5DA;border:1px solid #8b8475"></div>
<svg class="a" style="left:1898px;top:208px;" width="12" height="12" viewBox="0 0 12 12"><circle cx="4.5" cy="4.5" r="3.3" fill="none" stroke="#000" stroke-width="1.1"/><path d="M6.8 6.8L9.6 9.6M8.4 9.9L9.9 8.4" stroke="#000" stroke-width="1.8"/></svg>
<div class="a" style="left:1882px;top:204px;width:15px;height:19px;background:#ECE5DA;border:1px solid #8b8475"></div>
<svg class="a" style="left:1886px;top:215px;" width="7" height="2" viewBox="0 0 7 2"><rect x="0" y="0" width="1.2" height="2" fill="#000"/><rect x="3" y="0" width="1.2" height="2" fill="#000"/><rect x="6" y="0" width="1.2" height="2" fill="#000"/></svg>
<div class="t" style="left:935px;top:207px;">БУХ ПК СЗ</div>
<div class="t" style="left:828px;top:228px;">Б/счет, касса:</div>
<div class="a" style="left:932px;top:225px;width:979px;height:19px;background:#fff;border:1px solid #8b8475"></div>
<div class="a" style="left:1896px;top:225px;width:15px;height:19px;background:#ECE5DA;border:1px solid #8b8475"></div>
<svg class="a" style="left:1898px;top:229px;" width="12" height="12" viewBox="0 0 12 12"><circle cx="4.5" cy="4.5" r="3.3" fill="none" stroke="#000" stroke-width="1.1"/><path d="M6.8 6.8L9.6 9.6M8.4 9.9L9.9 8.4" stroke="#000" stroke-width="1.8"/></svg>
<div class="a" style="left:1882px;top:225px;width:15px;height:19px;background:#ECE5DA;border:1px solid #8b8475"></div>
<svg class="a" style="left:1886px;top:232px;" width="8" height="7" viewBox="0 0 8 7"><path d="M1 0.8L7 6.2M7 0.8L1 6.2" stroke="#000" stroke-width="1.7"/></svg>
<div class="a" style="left:1868px;top:225px;width:15px;height:19px;background:#ECE5DA;border:1px solid #8b8475"></div>
<svg class="a" style="left:1872px;top:236px;" width="7" height="2" viewBox="0 0 7 2"><rect x="0" y="0" width="1.2" height="2" fill="#000"/><rect x="3" y="0" width="1.2" height="2" fill="#000"/><rect x="6" y="0" width="1.2" height="2" fill="#000"/></svg>
<div class="t" style="left:935px;top:228px;">БУХ ПК "СЗ"</div>
<div class="t" style="left:828px;top:250px;">Условие запуска...</div>
<div class="a" style="left:932px;top:247px;width:979px;height:19px;background:#fff;border:1px solid #c9c3b6"></div>
<div class="a" style="left:1896px;top:247px;width:15px;height:19px;background:#ECE5DA;border:1px solid #c9c3b6"></div>
<svg class="a" style="left:1900px;top:258px;" width="7" height="2" viewBox="0 0 7 2"><rect x="0" y="0" width="1.2" height="2" fill="#b9b3a6"/><rect x="3" y="0" width="1.2" height="2" fill="#b9b3a6"/><rect x="6" y="0" width="1.2" height="2" fill="#b9b3a6"/></svg>
<div class="t" style="left:828px;top:272px;">Точка доставки:</div>
<div class="a" style="left:932px;top:269px;width:979px;height:19px;background:#fff;border:1px solid #8b8475"></div>
<div class="a" style="left:1896px;top:269px;width:15px;height:19px;background:#ECE5DA;border:1px solid #8b8475"></div>
<svg class="a" style="left:1898px;top:273px;" width="12" height="12" viewBox="0 0 12 12"><circle cx="4.5" cy="4.5" r="3.3" fill="none" stroke="#000" stroke-width="1.1"/><path d="M6.8 6.8L9.6 9.6M8.4 9.9L9.9 8.4" stroke="#000" stroke-width="1.8"/></svg>
<div class="a" style="left:1882px;top:269px;width:15px;height:19px;background:#ECE5DA;border:1px solid #8b8475"></div>
<svg class="a" style="left:1886px;top:276px;" width="8" height="7" viewBox="0 0 8 7"><path d="M1 0.8L7 6.2M7 0.8L1 6.2" stroke="#000" stroke-width="1.7"/></svg>
<div class="a" style="left:1868px;top:269px;width:15px;height:19px;background:#ECE5DA;border:1px solid #8b8475"></div>
<svg class="a" style="left:1872px;top:280px;" width="7" height="2" viewBox="0 0 7 2"><rect x="0" y="0" width="1.2" height="2" fill="#000"/><rect x="3" y="0" width="1.2" height="2" fill="#000"/><rect x="6" y="0" width="1.2" height="2" fill="#000"/></svg>
<div class="t" style="left:935px;top:272px;">192019, Санкт-Петербург г, Мельничная ул, дом № 22, этаж: 1 рп</div>
<div class="t" style="left:828px;top:294px;">Конт. лицо:</div>
<div class="a" style="left:932px;top:291px;width:979px;height:19px;background:#fff;border:1px solid #8b8475"></div>
<div class="a" style="left:1896px;top:291px;width:15px;height:19px;background:#ECE5DA;border:1px solid #8b8475"></div>
<svg class="a" style="left:1900px;top:298px;" width="8" height="7" viewBox="0 0 8 7"><path d="M1 0.8L7 6.2M7 0.8L1 6.2" stroke="#000" stroke-width="1.7"/></svg>
<div class="a" style="left:1882px;top:291px;width:15px;height:19px;background:#ECE5DA;border:1px solid #8b8475"></div>
<svg class="a" style="left:1886px;top:302px;" width="7" height="2" viewBox="0 0 7 2"><rect x="0" y="0" width="1.2" height="2" fill="#000"/><rect x="3" y="0" width="1.2" height="2" fill="#000"/><rect x="6" y="0" width="1.2" height="2" fill="#000"/></svg>
<div class="t" style="left:935px;top:294px;">Евсеев Тихон Михайлович</div>
<div class="t" style="left:935px;top:250px;color:#8c8c8c">Указание руководства</div>
<div class="a" style="left:1706px;top:160px;width:13px;height:13px;background:#fff;border:1px solid #8b8475"></div>
<div class="t" style="left:1722px;top:161px;">БУФ</div>
<div class="a" style="left:1761px;top:160px;width:13px;height:13px;background:#fff;border:1px solid #8b8475"></div>
<svg class="a" style="left:1763px;top:162px;" width="9" height="9" viewBox="0 0 9 9"><path d="M1 4L3.5 7L8 1" stroke="#000" stroke-width="1.8" fill="none"/></svg>
<div class="t" style="left:1777px;top:161px;">бух. учет</div>
<div class="a" style="left:1831px;top:160px;width:13px;height:13px;background:#fff;border:1px solid #8b8475"></div>
<div class="t" style="left:1847px;top:161px;">налог. учет</div>
<div class="a" style="left:1751px;top:180px;width:86px;height:20px;background:#ECE5DA;border:1px solid #8d887c;border-radius:2px;box-shadow:inset 1px 1px 0 #fff"></div>
<div class="t" style="left:1779px;top:182px;">Загрузить</div>
<svg class="a" style="left:1754px;top:182px;" width="17" height="16" viewBox="0 0 17 16"><defs><linearGradient id="gb"><stop offset="0" stop-color="#10c8ff"/><stop offset="1" stop-color="#101890"/></linearGradient></defs><rect x="0" y="0" width="7" height="7" fill="url(#gb)"/><path d="M7 2H11Q13 2 13 5V8M10.5 6L13 9L15.5 6" stroke="#10a010" stroke-width="1.3" fill="none"/><rect x="7" y="9" width="9" height="7" fill="#999"/><rect x="8" y="10" width="7" height="5" fill="#fff"/><path d="M8 10L11.5 13L15 10M8 15L10.5 12.5M15 15L12.5 12.5" stroke="#aaa" stroke-width="0.8" fill="none"/></svg>
<div class="a" style="left:1840px;top:180px;width:71px;height:20px;background:#ECE5DA;border:1px solid #8d887c;border-radius:2px;box-shadow:inset 1px 1px 0 #fff"></div>
<div class="t" style="left:1840px;top:182px;width:71px;text-align:center;transform-origin:50% 0;">Разместить</div>
<div class="t" style="left:1636px;top:316px;color:#f00000;font-weight:bold;font-size:12px;letter-spacing:0.23px;transform:none">Долг контрагента 34 435,00 руб.</div>
<div class="a" style="left:1894px;top:314px;width:17px;height:18px;background:#ECE5DA;border:1px solid #8d887c;border-radius:1px"></div>
<svg class="a" style="left:1898px;top:318px;" width="10" height="10" viewBox="0 0 10 10"><circle cx="4" cy="4" r="3" fill="none" stroke="#000" stroke-width="1.2"/><path d="M6 6L9 9" stroke="#000" stroke-width="2"/></svg>
<div class="t" style="left:15px;top:339px;">Оплата:</div>
<div class="a" style="left:59px;top:336px;width:227px;height:19px;background:#fff;border:1px solid #8b8475"></div>
<div class="a" style="left:271px;top:336px;width:15px;height:19px;background:#ECE5DA;border:1px solid #8b8475"></div>
<svg class="a" style="left:274px;top:341px;" width="9" height="9" viewBox="0 0 9 9"><g fill="#000" shape-rendering="crispEdges"><rect x="0" y="0" width="1" height="1"/><rect x="1" y="0" width="1" height="1"/><rect x="2" y="0" width="1" height="1"/><rect x="3" y="0" width="1" height="1"/><rect x="4" y="0" width="1" height="1"/><rect x="5" y="0" width="1" height="1"/><rect x="6" y="0" width="1" height="1"/><rect x="7" y="0" width="1" height="1"/><rect x="8" y="0" width="1" height="1"/><rect x="0" y="1" width="1" height="1"/><rect x="3" y="1" width="1" height="1"/><rect x="5" y="1" width="1" height="1"/><rect x="8" y="1" width="1" height="1"/><rect x="0" y="2" width="1" height="1"/><rect x="1" y="2" width="1" height="1"/><rect x="2" y="2" width="1" height="1"/><rect x="3" y="2" width="1" height="1"/><rect x="5" y="2" width="1" height="1"/><rect x="6" y="2" width="1" height="1"/><rect x="7" y="2" width="1" height="1"/><rect x="8" y="2" width="1" height="1"/><rect x="0" y="3" width="1" height="1"/><rect x="8" y="3" width="1" height="1"/><rect x="0" y="4" width="1" height="1"/><rect x="1" y="4" width="1" height="1"/><rect x="3" y="4" width="1" height="1"/><rect x="5" y="4" width="1" height="1"/><rect x="7" y="4" width="1" height="1"/><rect x="8" y="4" width="1" height="1"/><rect x="0" y="5" width="1" height="1"/><rect x="8" y="5" width="1" height="1"/><rect x="0" y="6" width="1" height="1"/><rect x="1" y="6" width="1" height="1"/><rect x="3" y="6" width="1" height="1"/><rect x="5" y="6" width="1" height="1"/><rect x="7" y="6" width="1" height="1"/><rect x="8" y="6" width="1" height="1"/><rect x="0" y="7" width="1" height="1"/><rect x="8" y="7" width="1" height="1"/><rect x="0" y="8" width="1" height="1"/><rect x="1" y="8" width="1" height="1"/><rect x="2" y="8" width="1" height="1"/><rect x="3" y="8" width="1" height="1"/><rect x="4" y="8" width="1" height="1"/><rect x="5" y="8" width="1" height="1"/><rect x="6" y="8" width="1" height="1"/><rect x="7" y="8" width="1" height="1"/><rect x="8" y="8" width="1" height="1"/></g></svg>
<div class="t" style="left:64px;top:339px;">.&nbsp;&nbsp;.</div>
<div class="t" style="left:622px;top:339px;">Производство:</div>
<div class="a" style="left:704px;top:336px;width:76px;height:19px;background:#fff;border:1px solid #8b8475"></div>
<div class="a" style="left:765px;top:336px;width:15px;height:19px;background:#ECE5DA;border:1px solid #8b8475"></div>
<svg class="a" style="left:768px;top:341px;" width="9" height="9" viewBox="0 0 9 9"><g fill="#000" shape-rendering="crispEdges"><rect x="0" y="0" width="1" height="1"/><rect x="1" y="0" width="1" height="1"/><rect x="2" y="0" width="1" height="1"/><rect x="3" y="0" width="1" height="1"/><rect x="4" y="0" width="1" height="1"/><rect x="5" y="0" width="1" height="1"/><rect x="6" y="0" width="1" height="1"/><rect x="7" y="0" width="1" height="1"/><rect x="8" y="0" width="1" height="1"/><rect x="0" y="1" width="1" height="1"/><rect x="3" y="1" width="1" height="1"/><rect x="5" y="1" width="1" height="1"/><rect x="8" y="1" width="1" height="1"/><rect x="0" y="2" width="1" height="1"/><rect x="1" y="2" width="1" height="1"/><rect x="2" y="2" width="1" height="1"/><rect x="3" y="2" width="1" height="1"/><rect x="5" y="2" width="1" height="1"/><rect x="6" y="2" width="1" height="1"/><rect x="7" y="2" width="1" height="1"/><rect x="8" y="2" width="1" height="1"/><rect x="0" y="3" width="1" height="1"/><rect x="8" y="3" width="1" height="1"/><rect x="0" y="4" width="1" height="1"/><rect x="1" y="4" width="1" height="1"/><rect x="3" y="4" width="1" height="1"/><rect x="5" y="4" width="1" height="1"/><rect x="7" y="4" width="1" height="1"/><rect x="8" y="4" width="1" height="1"/><rect x="0" y="5" width="1" height="1"/><rect x="8" y="5" width="1" height="1"/><rect x="0" y="6" width="1" height="1"/><rect x="1" y="6" width="1" height="1"/><rect x="3" y="6" width="1" height="1"/><rect x="5" y="6" width="1" height="1"/><rect x="7" y="6" width="1" height="1"/><rect x="8" y="6" width="1" height="1"/><rect x="0" y="7" width="1" height="1"/><rect x="8" y="7" width="1" height="1"/><rect x="0" y="8" width="1" height="1"/><rect x="1" y="8" width="1" height="1"/><rect x="2" y="8" width="1" height="1"/><rect x="3" y="8" width="1" height="1"/><rect x="4" y="8" width="1" height="1"/><rect x="5" y="8" width="1" height="1"/><rect x="6" y="8" width="1" height="1"/><rect x="7" y="8" width="1" height="1"/><rect x="8" y="8" width="1" height="1"/></g></svg>
<div class="t" style="left:707px;top:339px;">15.01.2019</div>
<div class="t" style="left:789px;top:339px;">Отгрузка:</div>
<div class="a" style="left:843px;top:336px;width:77px;height:19px;background:#fff;border:1px solid #8b8475"></div>
<div class="a" style="left:905px;top:336px;width:15px;height:19px;background:#ECE5DA;border:1px solid #8b8475"></div>
<svg class="a" style="left:908px;top:341px;" width="9" height="9" viewBox="0 0 9 9"><g fill="#000" shape-rendering="crispEdges"><rect x="0" y="0" width="1" height="1"/><rect x="1" y="0" width="1" height="1"/><rect x="2" y="0" width="1" height="1"/><rect x="3" y="0" width="1" height="1"/><rect x="4" y="0" width="1" height="1"/><rect x="5" y="0" width="1" height="1"/><rect x="6" y="0" width="1" height="1"/><rect x="7" y="0" width="1" height="1"/><rect x="8" y="0" width="1" height="1"/><rect x="0" y="1" width="1" height="1"/><rect x="3" y="1" width="1" height="1"/><rect x="5" y="1" width="1" height="1"/><rect x="8" y="1" width="1" height="1"/><rect x="0" y="2" width="1" height="1"/><rect x="1" y="2" width="1" height="1"/><rect x="2" y="2" width="1" height="1"/><rect x="3" y="2" width="1" height="1"/><rect x="5" y="2" width="1" height="1"/><rect x="6" y="2" width="1" height="1"/><rect x="7" y="2" width="1" height="1"/><rect x="8" y="2" width="1" height="1"/><rect x="0" y="3" width="1" height="1"/><rect x="8" y="3" width="1" height="1"/><rect x="0" y="4" width="1" height="1"/><rect x="1" y="4" width="1" height="1"/><rect x="3" y="4" width="1" height="1"/><rect x="5" y="4" width="1" height="1"/><rect x="7" y="4" width="1" height="1"/><rect x="8" y="4" width="1" height="1"/><rect x="0" y="5" width="1" height="1"/><rect x="8" y="5" width="1" height="1"/><rect x="0" y="6" width="1" height="1"/><rect x="1" y="6" width="1" height="1"/><rect x="3" y="6" width="1" height="1"/><rect x="5" y="6" width="1" height="1"/><rect x="7" y="6" width="1" height="1"/><rect x="8" y="6" width="1" height="1"/><rect x="0" y="7" width="1" height="1"/><rect x="8" y="7" width="1" height="1"/><rect x="0" y="8" width="1" height="1"/><rect x="1" y="8" width="1" height="1"/><rect x="2" y="8" width="1" height="1"/><rect x="3" y="8" width="1" height="1"/><rect x="4" y="8" width="1" height="1"/><rect x="5" y="8" width="1" height="1"/><rect x="6" y="8" width="1" height="1"/><rect x="7" y="8" width="1" height="1"/><rect x="8" y="8" width="1" height="1"/></g></svg>
<div class="t" style="left:846px;top:339px;">16.01.2019</div>
<div class="t" style="left:926px;top:339px;font-weight:bold;font-size:12px;letter-spacing:0.37px;transform:none"><u>Дата отгрузки по заказу: 17.01.2019</u></div>
<div class="t" style="left:1739px;top:339px;">Рекламация:</div>
<div class="a" style="left:1809px;top:336px;width:102px;height:19px;background:#fff;border:1px solid #8b8475"></div>
<div class="a" style="left:1896px;top:336px;width:15px;height:19px;background:#ECE5DA;border:1px solid #8b8475"></div>
<svg class="a" style="left:1900px;top:347px;" width="7" height="2" viewBox="0 0 7 2"><rect x="0" y="0" width="1.2" height="2" fill="#000"/><rect x="3" y="0" width="1.2" height="2" fill="#000"/><rect x="6" y="0" width="1.2" height="2" fill="#000"/></svg>
<div class="a" style="left:10px;top:382px;width:1901px;height:457px;border:1px solid #8b8475;border-top-color:#8b8475"></div>
<div class="a" style="left:123px;top:362px;width:141px;height:21px;background:#F4EFE5;border:1px solid #8b8475;border-bottom:none;border-radius:2px 2px 0 0;box-shadow:inset 1px 1px 0 #fff"></div>
<div class="t" style="left:128px;top:366px;">Москитные сетки (0 поз.)</div>
<div class="a" style="left:263px;top:362px;width:122px;height:21px;background:#F4EFE5;border:1px solid #8b8475;border-bottom:none;border-radius:2px 2px 0 0;box-shadow:inset 1px 1px 0 #fff"></div>
<div class="t" style="left:269px;top:366px;">Материалы (258 поз.)</div>
<div class="a" style="left:384px;top:362px;width:88px;height:21px;background:#F4EFE5;border:1px solid #8b8475;border-bottom:none;border-radius:2px 2px 0 0;box-shadow:inset 1px 1px 0 #fff"></div>
<div class="t" style="left:390px;top:366px;">Услуги (2 поз.)</div>
<div class="a" style="left:471px;top:362px;width:93px;height:21px;background:#F4EFE5;border:1px solid #8b8475;border-bottom:none;border-radius:2px 2px 0 0;box-shadow:inset 1px 1px 0 #fff"></div>
<div class="t" style="left:478px;top:366px;">Дополнительно</div>
<div class="a" style="left:563px;top:362px;width:63px;height:21px;background:#F4EFE5;border:1px solid #8b8475;border-bottom:none;border-radius:2px 2px 0 0;box-shadow:inset 1px 1px 0 #fff"></div>
<div class="t" style="left:570px;top:366px;">Доставка</div>
<div class="a" style="left:625px;top:362px;width:57px;height:21px;background:#F4EFE5;border:1px solid #8b8475;border-bottom:none;border-radius:2px 2px 0 0;box-shadow:inset 1px 1px 0 #fff"></div>
<div class="t" style="left:631px;top:366px;">Раскрой</div>
<div class="a" style="left:10px;top:361px;width:113px;height:23px;background:#FEFAEF;border:1px solid #8b8475;border-bottom:none;border-radius:2px 2px 0 0"></div>
<svg class="a" style="left:16px;top:364px;" width="17" height="17" viewBox="0 0 17 17"><path d="M4 1H16V12L12 16H0V5Z" fill="#7a2a2a"/><rect x="1" y="3" width="10" height="5" fill="#f06020"/><rect x="0" y="10" width="10" height="5" fill="#f06020"/><rect x="1" y="8" width="10" height="2" fill="#fff"/><rect x="4" y="4.5" width="4" height="1" fill="#ff0"/><rect x="3" y="11.5" width="4" height="1" fill="#ff0"/></svg>
<div class="t" style="left:35px;top:365px;">Товары (3 поз.)</div>
<div class="a" style="left:18px;top:384px;width:39px;height:22px;background:#F2EEE4;border:1px solid #8b8475"></div>
<div class="t" style="left:22px;top:388px;">Эскиз</div>
<svg class="a" style="left:61px;top:387px;" width="17" height="17" viewBox="0 0 17 17"><rect x="6" y="1" width="10" height="4" fill="#bcc0e0"/><rect x="6" y="6" width="10" height="4" fill="#bcc0e0"/><rect x="6" y="11" width="10" height="4" fill="#bcc0e0"/><path d="M3 8H11" stroke="#2a5ab0" stroke-width="1.2"/><circle cx="3" cy="3" r="2.5" fill="none" stroke="#f8d000" stroke-width="1.5"/></svg>
<svg class="a" style="left:84px;top:387px;" width="17" height="17" viewBox="0 0 17 17"><rect x="6" y="1" width="10" height="4" fill="#bcc0e0"/><rect x="6" y="6" width="10" height="4" fill="#bcc0e0"/><rect x="6" y="11" width="10" height="4" fill="#bcc0e0"/><path d="M3 8H11" stroke="#2a5ab0" stroke-width="1.2"/><path d="M4 0V7M0.5 3.5H7.5" stroke="#10a010" stroke-width="2"/></svg>
<svg class="a" style="left:107px;top:387px;" width="17" height="17" viewBox="0 0 17 17"><rect x="3" y="1" width="10" height="4" fill="#c8cad8"/><rect x="3" y="6" width="10" height="4" fill="#c8cad8"/><rect x="3" y="11" width="10" height="4" fill="#c8cad8"/><path d="M9 9L15 15" stroke="#8a9a88" stroke-width="3"/></svg>
<svg class="a" style="left:130px;top:387px;" width="17" height="17" viewBox="0 0 17 17"><rect x="6" y="1" width="10" height="4" fill="#bcc0e0"/><rect x="6" y="6" width="10" height="4" fill="#bcc0e0"/><rect x="6" y="11" width="10" height="4" fill="#bcc0e0"/><path d="M3 8H11" stroke="#2a5ab0" stroke-width="1.2"/><path d="M1 0L6 5M6 0L1 5" stroke="#e03000" stroke-width="1.6"/></svg>
<svg class="a" style="left:153px;top:388px;" width="17" height="16" viewBox="0 0 17 16"><rect x="0" y="1" width="13" height="12" fill="#b8b8b8"/><rect x="2" y="2" width="9" height="4" fill="#d8d8d8"/><rect x="7" y="9" width="9" height="6" fill="#c8c8c8"/></svg>
<svg class="a" style="left:178px;top:387px;" width="13" height="17" viewBox="0 0 13 17"><path d="M6.5 1L1 7H4.5V16H8.5V7H12Z" fill="#a8aec8"/></svg>
<svg class="a" style="left:200px;top:387px;" width="13" height="17" viewBox="0 0 13 17"><path d="M6.5 16L1 10H4.5V1H8.5V10H12Z" fill="#2a3ab8"/></svg>
<svg class="a" style="left:222px;top:387px;" width="17" height="17" viewBox="0 0 17 17"><rect x="0" y="2" width="9" height="3" fill="#c8c8d0"/><rect x="0" y="7" width="9" height="3" fill="#c8c8d0"/><rect x="0" y="12" width="9" height="3" fill="#c8c8d0"/><text x="10" y="7" font-size="7" fill="#b0a8c0" font-family="Liberation Sans">A</text><text x="10" y="15" font-size="7" fill="#b0a8c0" font-family="Liberation Sans">Z</text></svg>
<svg class="a" style="left:245px;top:387px;" width="17" height="17" viewBox="0 0 17 17"><rect x="0" y="2" width="9" height="3" fill="#c8c8d0"/><rect x="0" y="7" width="9" height="3" fill="#c8c8d0"/><rect x="0" y="12" width="9" height="3" fill="#c8c8d0"/><text x="10" y="7" font-size="7" fill="#b0a8c0" font-family="Liberation Sans">Z</text><text x="10" y="15" font-size="7" fill="#b0a8c0" font-family="Liberation Sans">A</text></svg>
<svg class="a" style="left:268px;top:387px;" width="17" height="17" viewBox="0 0 17 17"><rect x="1" y="1" width="15" height="2" fill="#b8bce8"/><rect x="1" y="4" width="15" height="2" fill="#b8bce8"/><rect x="4" y="7" width="12" height="2" fill="#b8bce8"/><circle cx="3" cy="3" r="2" fill="#ff0" stroke="#e0c000" stroke-width="0.6"/><rect x="0" y="9" width="17" height="1" fill="#9c3"/><rect x="1" y="11" width="1" height="5" fill="#000"/><rect x="3" y="11" width="1" height="5" fill="#000"/><rect x="5" y="11" width="1" height="5" fill="#000"/><rect x="7" y="11" width="1" height="5" fill="#000"/><rect x="9" y="11" width="1" height="5" fill="#000"/><rect x="11" y="11" width="1" height="5" fill="#000"/><rect x="13" y="11" width="1" height="5" fill="#000"/><rect x="15" y="11" width="1" height="5" fill="#000"/><rect x="0" y="16" width="17" height="1" fill="#9c3"/></svg>
<svg class="a" style="left:291px;top:387px;" width="17" height="17" viewBox="0 0 17 17"><rect x="0" y="0" width="17" height="17" fill="#c8c8c8"/><rect x="2" y="2" width="3" height="13" rx="1.5" fill="#c8a0a0"/><rect x="7" y="2" width="3" height="13" rx="1.5" fill="#d0d0b0"/><rect x="12" y="2" width="3" height="13" rx="1.5" fill="#a0c0a8"/></svg>
<div class="t" style="left:310px;top:388px;color:#8e8e8e">Заполнить цвета</div>
<div class="t" style="left:403px;top:388px;">Заполнить</div>
<svg class="a" style="left:459px;top:393px;" width="7" height="4" viewBox="0 0 7 4"><path d="M0 0H7L3.5 3.5Z" fill="#000"/></svg>
<div class="a" style="left:472px;top:386px;width:1px;height:18px;background:#c5bfb2;box-shadow:1px 0 0 #fff"></div>
<div class="a" style="left:548px;top:386px;width:1px;height:18px;background:#c5bfb2;box-shadow:1px 0 0 #fff"></div>
<div class="a" style="left:600px;top:386px;width:1px;height:18px;background:#c5bfb2;box-shadow:1px 0 0 #fff"></div>
<div class="a" style="left:665px;top:386px;width:1px;height:18px;background:#c5bfb2;box-shadow:1px 0 0 #fff"></div>
<div class="a" style="left:754px;top:386px;width:1px;height:18px;background:#c5bfb2;box-shadow:1px 0 0 #fff"></div>
<div class="t" style="left:478px;top:388px;">Проверить</div>
<svg class="a" style="left:536px;top:393px;" width="7" height="4" viewBox="0 0 7 4"><path d="M0 0H7L3.5 3.5Z" fill="#000"/></svg>
<div class="t" style="left:554px;top:388px;">Подбор</div>
<div class="t" style="left:606px;top:388px;">Изменить</div>
<div class="t" style="left:671px;top:388px;">Состав набора</div>
<div class="t" style="left:760px;top:388px;">Па</div>
<svg class="a" style="left:42px;top:553px;" width="219" height="129" viewBox="0 0 219 129">
<rect x="0.5" y="0.5" width="218" height="128" fill="#fff" stroke="#000"/>
<rect x="6.5" y="5.5" width="60" height="117" fill="#d8ffff" stroke="#000"/>
<rect x="152.5" y="5.5" width="60" height="117" fill="#d8ffff" stroke="#000"/>
<path d="M0.5 0.5L6.5 5.5M218.5 0.5L212.5 5.5M0.5 128.5L6.5 122.5M218.5 128.5L212.5 122.5" stroke="#000"/>
<rect x="71.5" y="2.5" width="76" height="123" fill="#fff" stroke="#000"/>
<rect x="79.5" y="8.5" width="59" height="110" fill="#d8ffff" stroke="#000"/>
<path d="M71.5 2.5L79.5 8.5M147.5 2.5L138.5 8.5M71.5 125.5L79.5 118.5M147.5 125.5L138.5 118.5" stroke="#000"/>
<path d="M79.5 63L138.5 8.5M79.5 63L138.5 118.5M79.5 118.5L109 8.5L138.5 118.5" stroke="#000" fill="none"/>
<rect x="73" y="59" width="4" height="4" fill="#fff" stroke="#000" stroke-width="0.8"/><path d="M74.5 63V72" stroke="#000" stroke-width="1.5"/>
</svg>
<div class="a" style="left:284px;top:407px;width:1620px;height:419px;background:#fff;border:1px solid #8b8475"></div>
<div class="a" style="left:285px;top:408px;width:1618px;height:14px;background:#ECE5DA"></div>
<div class="a" style="left:285px;top:408px;width:20px;height:14px;background:#D6D0C4"></div>
<div class="a" style="left:285px;top:422px;width:1618px;height:1px;background:#8e887a"></div>
<div class="a" style="left:285px;top:439px;width:1618px;height:1px;background:#8e887a"></div>
<div class="a" style="left:285px;top:456px;width:1618px;height:1px;background:#8e887a"></div>
<div class="a" style="left:285px;top:473px;width:1618px;height:1px;background:#8e887a"></div>
<div class="a" style="left:285px;top:810px;width:1618px;height:15px;background:#ECE5DA;border-top:1px solid #8e887a"></div>
<div class="a" style="left:305px;top:408px;width:1px;height:66px;background:#8e887a"></div>
<div class="a" style="left:305px;top:811px;width:1px;height:14px;background:#8e887a"></div>
<div class="a" style="left:334px;top:408px;width:1px;height:66px;background:#8e887a"></div>
<div class="a" style="left:334px;top:811px;width:1px;height:14px;background:#8e887a"></div>
<div class="a" style="left:363px;top:408px;width:1px;height:66px;background:#8e887a"></div>
<div class="a" style="left:363px;top:811px;width:1px;height:14px;background:#8e887a"></div>
<div class="a" style="left:388px;top:408px;width:1px;height:66px;background:#8e887a"></div>
<div class="a" style="left:388px;top:811px;width:1px;height:14px;background:#8e887a"></div>
<div class="a" style="left:409px;top:408px;width:1px;height:66px;background:#8e887a"></div>
<div class="a" style="left:409px;top:811px;width:1px;height:14px;background:#8e887a"></div>
<div class="a" style="left:430px;top:408px;width:1px;height:66px;background:#8e887a"></div>
<div class="a" style="left:430px;top:811px;width:1px;height:14px;background:#8e887a"></div>
<div class="a" style="left:459px;top:408px;width:1px;height:66px;background:#8e887a"></div>
<div class="a" style="left:459px;top:811px;width:1px;height:14px;background:#8e887a"></div>
<div class="a" style="left:480px;top:408px;width:1px;height:66px;background:#8e887a"></div>
<div class="a" style="left:480px;top:811px;width:1px;height:14px;background:#8e887a"></div>
<div class="a" style="left:501px;top:408px;width:1px;height:66px;background:#8e887a"></div>
<div class="a" style="left:501px;top:811px;width:1px;height:14px;background:#8e887a"></div>
<div class="a" style="left:522px;top:408px;width:1px;height:66px;background:#8e887a"></div>
<div class="a" style="left:522px;top:811px;width:1px;height:14px;background:#8e887a"></div>
<div class="a" style="left:698px;top:408px;width:1px;height:66px;background:#8e887a"></div>
<div class="a" style="left:698px;top:811px;width:1px;height:14px;background:#8e887a"></div>
<div class="a" style="left:923px;top:408px;width:1px;height:66px;background:#8e887a"></div>
<div class="a" style="left:923px;top:811px;width:1px;height:14px;background:#8e887a"></div>
<div class="a" style="left:1075px;top:408px;width:1px;height:66px;background:#8e887a"></div>
<div class="a" style="left:1075px;top:811px;width:1px;height:14px;background:#8e887a"></div>
<div class="a" style="left:1110px;top:408px;width:1px;height:66px;background:#8e887a"></div>
<div class="a" style="left:1110px;top:811px;width:1px;height:14px;background:#8e887a"></div>
<div class="a" style="left:1444px;top:408px;width:1px;height:66px;background:#8e887a"></div>
<div class="a" style="left:1444px;top:811px;width:1px;height:14px;background:#8e887a"></div>
<div class="a" style="left:1465px;top:408px;width:1px;height:66px;background:#8e887a"></div>
<div class="a" style="left:1465px;top:811px;width:1px;height:14px;background:#8e887a"></div>
<div class="a" style="left:1527px;top:408px;width:1px;height:66px;background:#8e887a"></div>
<div class="a" style="left:1527px;top:811px;width:1px;height:14px;background:#8e887a"></div>
<div class="a" style="left:1553px;top:408px;width:1px;height:66px;background:#8e887a"></div>
<div class="a" style="left:1553px;top:811px;width:1px;height:14px;background:#8e887a"></div>
<div class="a" style="left:1618px;top:408px;width:1px;height:66px;background:#8e887a"></div>
<div class="a" style="left:1618px;top:811px;width:1px;height:14px;background:#8e887a"></div>
<div class="a" style="left:1639px;top:408px;width:1px;height:66px;background:#8e887a"></div>
<div class="a" style="left:1639px;top:811px;width:1px;height:14px;background:#8e887a"></div>
<div class="a" style="left:1660px;top:408px;width:1px;height:66px;background:#8e887a"></div>
<div class="a" style="left:1660px;top:811px;width:1px;height:14px;background:#8e887a"></div>
<div class="a" style="left:1681px;top:408px;width:1px;height:66px;background:#8e887a"></div>
<div class="a" style="left:1681px;top:811px;width:1px;height:14px;background:#8e887a"></div>
<div class="a" style="left:1717px;top:408px;width:1px;height:66px;background:#8e887a"></div>
<div class="a" style="left:1717px;top:811px;width:1px;height:14px;background:#8e887a"></div>
<div class="a" style="left:1738px;top:408px;width:1px;height:66px;background:#8e887a"></div>
<div class="a" style="left:1738px;top:811px;width:1px;height:14px;background:#8e887a"></div>
<div class="a" style="left:1759px;top:408px;width:1px;height:66px;background:#8e887a"></div>
<div class="a" style="left:1759px;top:811px;width:1px;height:14px;background:#8e887a"></div>
<div class="a" style="left:1780px;top:408px;width:1px;height:66px;background:#8e887a"></div>
<div class="a" style="left:1780px;top:811px;width:1px;height:14px;background:#8e887a"></div>
<div class="a" style="left:1860px;top:408px;width:1px;height:66px;background:#8e887a"></div>
<div class="a" style="left:1860px;top:811px;width:1px;height:14px;background:#8e887a"></div>
<div class="a" style="left:1881px;top:408px;width:1px;height:66px;background:#8e887a"></div>
<div class="a" style="left:1881px;top:811px;width:1px;height:14px;background:#8e887a"></div>
<div class="t" style="left:286px;top:408px;">№</div>
<div class="t" style="left:307px;top:408px;">№ ...</div>
<div class="t" style="left:336px;top:408px;">К и...</div>
<div class="t" style="left:365px;top:408px;">Ви...</div>
<div class="t" style="left:390px;top:408px;">О...</div>
<div class="t" style="left:411px;top:408px;">Д...</div>
<div class="t" style="left:432px;top:408px;">УО</div>
<div class="t" style="left:461px;top:408px;">И...</div>
<div class="t" style="left:482px;top:408px;">З...</div>
<div class="t" style="left:503px;top:408px;">С...</div>
<div class="t" style="left:524px;top:408px;">Артикул</div>
<div class="t" style="left:700px;top:408px;">Номенклатура</div>
<div class="t" style="left:1114px;top:408px;">Комментарий</div>
<div class="t" style="left:1446px;top:408px;">S ...</div>
<div class="t" style="left:1467px;top:408px;">Всего м2</div>
<div class="t" style="left:1529px;top:408px;">Ед.</div>
<div class="t" style="left:1555px;top:408px;">Количество</div>
<div class="t" style="left:1620px;top:408px;">К.</div>
<div class="t" style="left:1641px;top:408px;">Ц...</div>
<div class="t" style="left:1662px;top:408px;">С...</div>
<div class="t" style="left:1683px;top:408px;">Ск. и...</div>
<div class="t" style="left:1719px;top:408px;">%...</div>
<div class="t" style="left:1740px;top:408px;">С...</div>
<div class="t" style="left:1761px;top:408px;">С...</div>
<div class="t" style="left:1782px;top:408px;">Всего</div>
<div class="t" style="left:1862px;top:408px;">С...</div>
<div class="t" style="left:1883px;top:408px;">Р...</div>
<div class="a" style="left:285px;top:423px;width:20px;height:16px;background:#000080"></div>
<div class="t" style="left:284px;top:424px;width:20px;text-align:right;transform-origin:100% 0;color:#fff;">1</div>
<div class="t" style="left:305px;top:424px;width:28px;text-align:right;transform-origin:100% 0;">1</div>
<div class="t" style="left:366px;top:424px;">И...</div>
<div class="t" style="left:388px;top:424px;width:20px;text-align:right;transform-origin:100% 0;">1</div>
<div class="t" style="left:430px;top:424px;width:28px;text-align:right;transform-origin:100% 0;">1,60</div>
<div class="t" style="left:459px;top:424px;width:20px;text-align:right;transform-origin:100% 0;">1</div>
<div class="t" style="left:480px;top:424px;width:20px;text-align:right;transform-origin:100% 0;">3</div>
<div class="t" style="left:501px;top:424px;width:20px;text-align:right;transform-origin:100% 0;">3</div>
<div class="t" style="left:525px;top:424px;">REHAU 60 Blitz new</div>
<div class="t" style="left:701px;top:424px;">REHAU 60 Blitz</div>
<div class="t" style="left:1444px;top:424px;width:20px;text-align:right;transform-origin:100% 0;">3...</div>
<div class="t" style="left:1465px;top:424px;width:61px;text-align:right;transform-origin:100% 0;">3,105</div>
<div class="t" style="left:1530px;top:424px;">шт</div>
<div class="t" style="left:1553px;top:424px;width:64px;text-align:right;transform-origin:100% 0;">1,000</div>
<div class="t" style="left:1621px;top:424px;">1...</div>
<div class="t" style="left:1642px;top:424px;">1...</div>
<div class="t" style="left:1663px;top:424px;">1...</div>
<div class="t" style="left:1681px;top:424px;width:35px;text-align:right;transform-origin:100% 0;">45,00</div>
<div class="t" style="left:1738px;top:424px;width:20px;text-align:right;transform-origin:100% 0;">8...</div>
<div class="t" style="left:1762px;top:424px;">1...</div>
<div class="t" style="left:1780px;top:424px;width:79px;text-align:right;transform-origin:100% 0;">8 983,41</div>
<div class="t" style="left:1863px;top:424px;">1...</div>
<div class="t" style="left:284px;top:441px;width:20px;text-align:right;transform-origin:100% 0;">2</div>
<div class="t" style="left:305px;top:441px;width:28px;text-align:right;transform-origin:100% 0;">2</div>
<div class="t" style="left:366px;top:441px;">И...</div>
<div class="t" style="left:388px;top:441px;width:20px;text-align:right;transform-origin:100% 0;">1</div>
<div class="t" style="left:430px;top:441px;width:28px;text-align:right;transform-origin:100% 0;">2,30</div>
<div class="t" style="left:459px;top:441px;width:20px;text-align:right;transform-origin:100% 0;">1</div>
<div class="t" style="left:480px;top:441px;width:20px;text-align:right;transform-origin:100% 0;">3</div>
<div class="t" style="left:501px;top:441px;width:20px;text-align:right;transform-origin:100% 0;">3</div>
<div class="t" style="left:525px;top:441px;">REHAU 60 Blitz new</div>
<div class="t" style="left:701px;top:441px;">REHAU 60 Blitz</div>
<div class="t" style="left:1444px;top:441px;width:20px;text-align:right;transform-origin:100% 0;">3...</div>
<div class="t" style="left:1465px;top:441px;width:61px;text-align:right;transform-origin:100% 0;">3,945</div>
<div class="t" style="left:1530px;top:441px;">шт</div>
<div class="t" style="left:1553px;top:441px;width:64px;text-align:right;transform-origin:100% 0;">1,000</div>
<div class="t" style="left:1621px;top:441px;">1...</div>
<div class="t" style="left:1642px;top:441px;">2...</div>
<div class="t" style="left:1663px;top:441px;">2...</div>
<div class="t" style="left:1681px;top:441px;width:35px;text-align:right;transform-origin:100% 0;">45,00</div>
<div class="t" style="left:1738px;top:441px;width:20px;text-align:right;transform-origin:100% 0;">1...</div>
<div class="t" style="left:1762px;top:441px;">1...</div>
<div class="t" style="left:1780px;top:441px;width:79px;text-align:right;transform-origin:100% 0;">12 697,28</div>
<div class="t" style="left:1863px;top:441px;">1...</div>
<div class="t" style="left:284px;top:458px;width:20px;text-align:right;transform-origin:100% 0;">3</div>
<div class="t" style="left:305px;top:458px;width:28px;text-align:right;transform-origin:100% 0;">3</div>
<div class="t" style="left:366px;top:458px;">И...</div>
<div class="t" style="left:388px;top:458px;width:20px;text-align:right;transform-origin:100% 0;">2</div>
<div class="t" style="left:430px;top:458px;width:28px;text-align:right;transform-origin:100% 0;">2,60</div>
<div class="t" style="left:459px;top:458px;width:20px;text-align:right;transform-origin:100% 0;">2</div>
<div class="t" style="left:480px;top:458px;width:20px;text-align:right;transform-origin:100% 0;">4</div>
<div class="t" style="left:501px;top:458px;width:20px;text-align:right;transform-origin:100% 0;">4</div>
<div class="t" style="left:525px;top:458px;">REHAU 60 Blitz new</div>
<div class="t" style="left:701px;top:458px;">REHAU 60 Blitz</div>
<div class="t" style="left:1444px;top:458px;width:20px;text-align:right;transform-origin:100% 0;">1...</div>
<div class="t" style="left:1465px;top:458px;width:61px;text-align:right;transform-origin:100% 0;">3,840</div>
<div class="t" style="left:1530px;top:458px;">шт</div>
<div class="t" style="left:1553px;top:458px;width:64px;text-align:right;transform-origin:100% 0;">2,000</div>
<div class="t" style="left:1621px;top:458px;">1...</div>
<div class="t" style="left:1642px;top:458px;">1...</div>
<div class="t" style="left:1663px;top:458px;">2...</div>
<div class="t" style="left:1681px;top:458px;width:35px;text-align:right;transform-origin:100% 0;">45,00</div>
<div class="t" style="left:1738px;top:458px;width:20px;text-align:right;transform-origin:100% 0;">1...</div>
<div class="t" style="left:1762px;top:458px;">1...</div>
<div class="t" style="left:1780px;top:458px;width:79px;text-align:right;transform-origin:100% 0;">12 752,31</div>
<div class="t" style="left:1863px;top:458px;">1...</div>
<div class="t" style="left:390px;top:811px;">4</div>
<div class="t" style="left:432px;top:811px;">6,50</div>
<div class="t" style="left:461px;top:811px;">4</div>
<div class="t" style="left:482px;top:811px;">10</div>
<div class="t" style="left:503px;top:811px;">10</div>
<div class="t" style="left:1467px;top:811px;">10,890</div>
<div class="a" style="left:774px;top:364px;width:372px;height:322px;background:#585858;border:1px solid #4a4a4a;border-top-color:#7a7a7a;border-right-color:#111;border-bottom-color:#1a1a1a"></div>
<div class="a" style="left:778px;top:386px;width:364px;height:295px;background:#FEFAEF"></div>
<div class="t" style="left:783px;top:370px;font-weight:bold;font-size:12px;letter-spacing:0.28px;color:#fff;line-height:14px;transform:none">Печать: Заказ покупателя 100 169 от 10.01.2019 1...:58</div>
<svg class="a" style="left:1126px;top:371px;" width="12" height="12" viewBox="0 0 12 12"><path d="M2 2L10 10M10 2L2 10" stroke="#fff" stroke-width="2.4" stroke-linecap="square"/></svg>
<div class="a" style="left:786px;top:394px;width:260px;height:265px;background:#fff;border:1px solid #8b8475"></div>
<div class="a" style="left:787px;top:395px;width:258px;height:17px;background:#000080;outline:1px dotted #ffff60;outline-offset:-1px"></div>
<div class="t" style="left:790px;top:396px;font-weight:bold;font-size:12px;color:#fff;letter-spacing:0.15px;transform:none">Заказ покупателя</div>
<div class="t" style="left:789px;top:413px;">Заказ покупателя (без цен)</div>
<div class="t" style="left:789px;top:430px;">Заказ покупателя (без цен) с Эскизами</div>
<div class="t" style="left:789px;top:447px;">Счет на оплату (с учетом корректировок)</div>
<div class="t" style="left:789px;top:464px;">Счет на оплату без услуг (с учетом корректиров...</div>
<div class="t" style="left:789px;top:481px;">Бланк товарного наполнения (адресный склад)</div>
<div class="t" style="left:789px;top:498px;">Договор</div>
<div class="t" style="left:789px;top:515px;">Производство и фурнитура</div>
<div class="t" style="left:789px;top:532px;">Счет с эскизами для конечного покупателя</div>
<div class="t" style="left:789px;top:549px;">Лист комплектации с фото</div>
<div class="t" style="left:789px;top:566px;">Паспорт TEPLOWIN</div>
<div class="t" style="left:789px;top:583px;">Раскрой</div>
<div class="t" style="left:789px;top:600px;">Счет б/н от ПК СЕВЕРО-ЗАПАД</div>
<div class="t" style="left:789px;top:617px;">Счет б/н от Северо-Западной компании</div>
<div class="t" style="left:789px;top:634px;">Счет б/н от Мастера</div>
<div class="t" style="left:786px;top:660px;">Встроенная печатная форма</div>
<div class="t" style="left:1051px;top:395px;">На принтер</div>
<div class="a" style="left:1121px;top:395px;width:13px;height:13px;background:#fff;border:1px solid #8b8475"></div>
<div class="a" style="left:1051px;top:414px;width:84px;height:22px;background:#ECE5DA;border:1px solid #8d887c;border-radius:2px;box-shadow:inset 1px 1px 0 #fff"></div>
<div class="t" style="left:1051px;top:417px;width:84px;text-align:center;transform-origin:50% 0;">Печать</div>
<div class="a" style="left:1051px;top:441px;width:84px;height:22px;background:#ECE5DA;border:1px solid #8d887c;border-radius:2px;box-shadow:inset 1px 1px 0 #fff"></div>
<div class="t" style="left:1051px;top:444px;width:84px;text-align:center;transform-origin:50% 0;">Отмена</div>
<div class="a" style="left:1051px;top:468px;width:84px;height:22px;background:#ECE5DA;border:1px solid #8d887c;border-radius:2px;box-shadow:inset 1px 1px 0 #fff"></div>
<div class="t" style="left:1051px;top:471px;width:84px;text-align:center;transform-origin:50% 0;">По умолчанию</div>
<svg class="a" style="left:775px;top:450px;" width="280" height="180" viewBox="0 0 280 180"><g fill="none" stroke="#f00000" stroke-width="2" stroke-linecap="round" stroke-linejoin="round">
<path d="M7 8.5L45 8.5L46 9.5L136 9.5L137 11.5L233 11.5"/>
<path d="M10 29L30 29L31 27.5L143 27.5L145 29L195 29L197 30L263 30"/>
<path d="M15 164.5L30 161.5L60 161L120 161.5L135 163L188 163"/>
</g></svg>
<div class="t" style="left:11px;top:846px;color:#0a1a9a">Тип цен: Не заполнено!</div>
<div class="t" style="left:867px;top:846px;">Всего УО:</div>
<div class="t" style="left:900px;top:846px;width:60px;text-align:right;transform-origin:100% 0;font-weight:bold;font-size:12px;letter-spacing:0.3px;transform:none">6,50</div>
<div class="t" style="left:967px;top:846px;">Заполнений:</div>
<div class="t" style="left:1020px;top:846px;width:62px;text-align:right;transform-origin:100% 0;font-weight:bold;font-size:12px;letter-spacing:0.3px;transform:none">10</div>
<div class="t" style="left:867px;top:868px;">Изделий:</div>
<div class="t" style="left:900px;top:868px;width:60px;text-align:right;transform-origin:100% 0;font-weight:bold;font-size:12px;letter-spacing:0.3px;transform:none">4</div>
<div class="t" style="left:967px;top:868px;">Стеклопакетов:</div>
<div class="t" style="left:1020px;top:868px;width:62px;text-align:right;transform-origin:100% 0;font-weight:bold;font-size:12px;letter-spacing:0.3px;transform:none">10</div>
<div class="t" style="left:1761px;top:846px;">Всего (руб.):</div>
<div class="t" style="left:1800px;top:846px;width:107px;text-align:right;transform-origin:100% 0;font-weight:bold;font-size:12px;letter-spacing:0.3px;transform:none">34 435,00</div>
<div class="t" style="left:1761px;top:867px;">НДС (в т. ч.):</div>
<div class="t" style="left:1800px;top:867px;width:107px;text-align:right;transform-origin:100% 0;font-weight:bold;font-size:12px;letter-spacing:0.3px;transform:none">5 252,79</div>
<div class="a" style="left:10px;top:887px;width:135px;height:19px;background:#ECE5DA;border:1px solid #8d887c;border-radius:2px;box-shadow:inset 1px 1px 0 #fff"></div>
<div class="t" style="left:10px;top:889px;width:135px;text-align:center;transform-origin:50% 0;">Добавить комментарий</div>
<div class="a" style="left:10px;top:909px;width:1902px;height:68px;background:#fff;border:1px solid #8b8475"></div>
<div class="t" style="left:13px;top:912px;">16</div>
<div class="a" style="left:2px;top:980px;width:1916px;height:1px;background:#8b877a"></div>
<div class="a" style="left:2px;top:981px;width:1916px;height:25px;background:#ECE5DA"></div>
<div class="t" style="left:1486px;top:986px;">Пакетная печать</div>
<div class="t" style="left:1581px;top:986px;">Печать</div>
<div class="a" style="left:1625px;top:984px;width:1px;height:19px;background:#c5bfb2;box-shadow:1px 0 0 #fff"></div>
<div class="t" style="left:1633px;top:986px;font-weight:bold;font-size:12px;letter-spacing:0.1px;transform:none">Запуск в ПРОИЗВОДСТВО</div>
<div class="a" style="left:1799px;top:984px;width:1px;height:19px;background:#c5bfb2;box-shadow:1px 0 0 #fff"></div>
<div class="t" style="left:1807px;top:986px;">Записать</div>
<div class="a" style="left:1861px;top:984px;width:1px;height:19px;background:#c5bfb2;box-shadow:1px 0 0 #fff"></div>
<div class="t" style="left:1869px;top:986px;">Закрыть</div>
<div class="a" style="left:0px;top:1006px;width:1920px;height:1px;background:#fff"></div>
<div class="a" style="left:0px;top:1007px;width:1920px;height:23px;background:#ECE5DA"></div>
<div class="a" style="left:3px;top:1008px;width:156px;height:20px;background:#A0A0A0;border:1px solid #7a7466"></div>
<svg class="a" style="left:5px;top:1010px;" width="17" height="15" viewBox="0 0 17 15"><path d="M1 12L4 4H9L11 2H16V13H2Z" fill="#f4f08a"/><path d="M3 7L11 4L15 8V13H3Z" fill="#fff"/><path d="M1 9H15V14H2Z" fill="#8e8a5a"/><path d="M15 3V14" stroke="#6a6838" stroke-width="1.2"/></svg>
<div class="t" style="left:23px;top:1011px;color:#f6f6f6">Заказы покупателей</div>
<div class="a" style="left:160px;top:1008px;width:158px;height:20px;background:#A0A0A0;border:1px solid #7a7466"></div>
<svg class="a" style="left:162px;top:1010px;" width="17" height="15" viewBox="0 0 17 15"><path d="M1 12L4 4H9L11 2H16V13H2Z" fill="#f4f08a"/><path d="M3 7L11 4L15 8V13H3Z" fill="#fff"/><path d="M1 9H15V14H2Z" fill="#8e8a5a"/><path d="M15 3V14" stroke="#6a6838" stroke-width="1.2"/></svg>
<div class="t" style="left:180px;top:1011px;color:#f6f6f6">Приходные кассовые ор...</div>
<div class="a" style="left:319px;top:1008px;width:158px;height:20px;background:#A0A0A0;border:1px solid #7a7466"></div>
<svg class="a" style="left:321px;top:1010px;" width="17" height="15" viewBox="0 0 17 15"><path d="M1 12L4 4H9L11 2H16V13H2Z" fill="#f4f08a"/><path d="M3 7L11 4L15 8V13H3Z" fill="#fff"/><path d="M1 9H15V14H2Z" fill="#8e8a5a"/><path d="M15 3V14" stroke="#6a6838" stroke-width="1.2"/></svg>
<div class="t" style="left:339px;top:1011px;color:#f6f6f6">Заявки на расходование...</div>
<div class="a" style="left:478px;top:1008px;width:158px;height:20px;background:#A0A0A0;border:1px solid #7a7466"></div>
<svg class="a" style="left:480px;top:1010px;" width="17" height="15" viewBox="0 0 17 15"><path d="M1 12L4 4H9L11 2H16V13H2Z" fill="#f4f08a"/><path d="M3 7L11 4L15 8V13H3Z" fill="#fff"/><path d="M1 9H15V14H2Z" fill="#8e8a5a"/><path d="M15 3V14" stroke="#6a6838" stroke-width="1.2"/></svg>
<div class="t" style="left:498px;top:1011px;color:#f6f6f6">Расходные кассовые ор...</div>
<div class="a" style="left:637px;top:1008px;width:158px;height:20px;background:#A0A0A0;border:1px solid #7a7466"></div>
<svg class="a" style="left:639px;top:1010px;" width="17" height="15" viewBox="0 0 17 15"><path d="M1 12L4 4H9L11 2H16V13H2Z" fill="#f4f08a"/><path d="M3 7L11 4L15 8V13H3Z" fill="#fff"/><path d="M1 9H15V14H2Z" fill="#8e8a5a"/><path d="M15 3V14" stroke="#6a6838" stroke-width="1.2"/></svg>
<div class="t" style="left:657px;top:1011px;color:#f6f6f6">Авансовые отчеты</div>
<div class="a" style="left:796px;top:1008px;width:158px;height:20px;background:#A0A0A0;border:1px solid #7a7466"></div>
<svg class="a" style="left:798px;top:1010px;" width="17" height="15" viewBox="0 0 17 15"><path d="M1 12L4 4H9L11 2H16V13H2Z" fill="#f4f08a"/><path d="M3 7L11 4L15 8V13H3Z" fill="#fff"/><path d="M1 9H15V14H2Z" fill="#8e8a5a"/><path d="M15 3V14" stroke="#6a6838" stroke-width="1.2"/></svg>
<div class="t" style="left:816px;top:1011px;color:#f6f6f6">Зарплаты к выплате орг...</div>
<div class="a" style="left:955px;top:1008px;width:158px;height:20px;background:#A0A0A0;border:1px solid #7a7466"></div>
<svg class="a" style="left:957px;top:1010px;" width="17" height="16" viewBox="0 0 17 16"><rect x="1.5" y="1.5" width="10" height="13" fill="#fff" stroke="#333"/><path d="M3 4H10M3 6H10M3 8H10M3 10H10" stroke="#555" stroke-width="0.7"/><path d="M8 14L14 3L16 4L10 15Z" fill="#ddd" stroke="#333" stroke-width="0.6"/></svg>
<div class="t" style="left:975px;top:1011px;color:#f6f6f6">Ведомость по...: Основная</div>
<div class="a" style="left:1114px;top:1008px;width:158px;height:20px;background:#A0A0A0;border:1px solid #7a7466"></div>
<svg class="a" style="left:1116px;top:1010px;" width="17" height="15" viewBox="0 0 17 15"><path d="M1 12L4 4H9L11 2H16V13H2Z" fill="#f4f08a"/><path d="M3 7L11 4L15 8V13H3Z" fill="#fff"/><path d="M1 9H15V14H2Z" fill="#8e8a5a"/><path d="M15 3V14" stroke="#6a6838" stroke-width="1.2"/></svg>
<div class="t" style="left:1134px;top:1011px;color:#f6f6f6">Корректировки долга</div>
<div class="a" style="left:1273px;top:1008px;width:158px;height:20px;background:#A0A0A0;border:1px solid #7a7466"></div>
<svg class="a" style="left:1275px;top:1010px;" width="17" height="15" viewBox="0 0 17 15"><path d="M1 12L4 4H9L11 2H16V13H2Z" fill="#f4f08a"/><path d="M3 7L11 4L15 8V13H3Z" fill="#fff"/><path d="M1 9H15V14H2Z" fill="#8e8a5a"/><path d="M15 3V14" stroke="#6a6838" stroke-width="1.2"/></svg>
<div class="t" style="left:1293px;top:1011px;color:#f6f6f6">Платежные поручения (в...</div>
<div class="a" style="left:1432px;top:1008px;width:158px;height:20px;background:#A0A0A0;border:1px solid #7a7466"></div>
<svg class="a" style="left:1434px;top:1010px;" width="17" height="15" viewBox="0 0 17 15"><path d="M1 12L4 4H9L11 2H16V13H2Z" fill="#f4f08a"/><path d="M3 7L11 4L15 8V13H3Z" fill="#fff"/><path d="M1 9H15V14H2Z" fill="#8e8a5a"/><path d="M15 3V14" stroke="#6a6838" stroke-width="1.2"/></svg>
<div class="t" style="left:1452px;top:1011px;color:#f6f6f6">Платежные поручения (и...</div>
<div class="a" style="left:1591px;top:1008px;width:158px;height:20px;background:#A0A0A0;border:1px solid #7a7466"></div>
<svg class="a" style="left:1593px;top:1010px;" width="17" height="16" viewBox="0 0 17 16"><rect x="1.5" y="1.5" width="10" height="13" fill="#fff" stroke="#333"/><path d="M3 4H10M3 6H10M3 8H10M3 10H10" stroke="#555" stroke-width="0.7"/><path d="M8 14L14 3L16 4L10 15Z" fill="#ddd" stroke="#333" stroke-width="0.6"/></svg>
<div class="t" style="left:1611px;top:1011px;color:#f6f6f6">Ведом...: Основная касса</div>
<div class="a" style="left:1750px;top:1008px;width:158px;height:20px;background:#575757;border:1px solid #7a7466"></div>
<svg class="a" style="left:1755px;top:1010px;" width="12" height="15" viewBox="0 0 12 15"><rect x="0" y="0" width="12" height="15" fill="#fff"/><rect x="1" y="1" width="10" height="1.5" fill="#2a5aa0"/><path d="M4 5H11M6 8H11M6 11H11" stroke="#99c" stroke-width="0.8"/><path d="M3 6L5.5 8.5L3 11L0.5 8.5Z" fill="none" stroke="#2a5aa0" stroke-width="1"/></svg>
<div class="t" style="left:1769px;top:1011px;color:#f6f6f6">...: продажа, комиссия. ...</div>
<div class="a" style="left:0px;top:1030px;width:1920px;height:20px;background:linear-gradient(#ECE5DA 0 18px,#d8d0c4 18px 19px,#f0ebe0 19px)"></div>
<div class="t" style="left:4px;top:1034px;">Печать</div>
<div class="a" style="left:1847px;top:1032px;width:1px;height:17px;background:#c5bfb2;box-shadow:1px 0 0 #fff"></div>
<div class="a" style="left:1852px;top:1031px;width:30px;height:19px;border:1px solid #d0c9bc;border-right-color:#fff;border-bottom-color:#fff"></div>
<div class="t" style="left:1856px;top:1034px;color:#9a9a9a">CAP</div>
<div class="a" style="left:1886px;top:1031px;width:30px;height:19px;border:1px solid #d0c9bc;border-right-color:#fff;border-bottom-color:#fff"></div>
<div class="t" style="left:1889px;top:1034px;">NUM</div>
<div class="a" style="left:0px;top:1050px;width:1920px;height:30px;background:linear-gradient(#222 0 1px,#888 1px 2px,#6a6a6a 2px,#585858 15px,#3c3c3c 15px,#282828 29px,#1a1a1a 29px)"></div>
<div class="a" style="left:1820px;top:1051px;width:100px;height:29px;background:linear-gradient(#2a2a2a,#222 13px,#1a1a1a 14px,#202020);border-left:1px solid #000"></div>
<div class="a" style="left:0px;top:1051px;width:96px;height:29px;background:linear-gradient(#f0a070 0,#e07838 5px,#d86a2a 13px,#b8501a 14px,#c05a20 28px);border-radius:0 12px 0 0;box-shadow:inset -1px 0 0 #8a3a10"></div>
<svg class="a" style="left:9px;top:1059px;" width="17" height="16" viewBox="0 0 17 16"><path d="M1 2Q4 0 8 2L7 8Q4 6 1 8Z" fill="#f04a20"/><path d="M9 2Q12 0 16 2L15 8Q12 6 8 8Z" fill="#50b030"/><path d="M1 9Q4 7 7 9L6 15Q3 13 0 15Z" fill="#2a8ae0"/><path d="M8 9Q11 7 15 9L14 15Q11 13 7 15Z" fill="#f8c020"/></svg>
<div class="t" style="left:26px;top:1054px;font-size:21px;line-height:24px;font-weight:bold;font-style:italic;color:#fff;text-shadow:1px 1px 1px #5a2a0a;transform:none">пуск</div>
<svg class="a" style="left:108px;top:1057px;" width="17" height="17" viewBox="0 0 17 17"><rect x="0.5" y="0.5" width="16" height="16" rx="2.5" fill="#ffff00" stroke="#c8b400"/><path d="M2.5 4.5L4.5 2.5V9.5" stroke="#ee0000" stroke-width="2" fill="none"/><path d="M13 4Q12 2.2 10 2.2Q7.2 2.2 7.2 5.5Q7.2 8.8 10 8.8H15" stroke="#ee0000" stroke-width="2" fill="none"/><path d="M4 11L6 15.5L8 11M10.5 11.2A1.5 1.1 0 1 0 10.6 11.2ZM10.5 13.2A1.6 1.2 0 1 0 10.6 13.2Z" stroke="#b05000" stroke-width="0.9" fill="none"/></svg>
<svg class="a" style="left:131px;top:1057px;" width="16" height="16" viewBox="0 0 16 16"><circle cx="8" cy="8" r="7.5" fill="#ffe070" stroke="#d09000"/><text x="2" y="11" font-family="Liberation Sans" font-weight="bold" font-size="8" fill="#e00000">1C</text></svg>
<svg class="a" style="left:154px;top:1058px;" width="17" height="15" viewBox="0 0 17 15"><rect x="0.5" y="0.5" width="16" height="12" fill="#3a7ad8" stroke="#aab"/><rect x="2" y="2" width="13" height="9" fill="#5aa0f0"/><rect x="3" y="13" width="11" height="2" fill="#889"/></svg>
<div class="t" style="left:182px;top:1053px;font-size:14px;color:#fff;font-weight:bold;transform:none">»</div>
<div class="a" style="left:201px;top:1055px;width:157px;height:22px;background:linear-gradient(#4e4e4e,#3e3e3e 50%,#333 51%,#2c2c2c);border:1px solid #1e1e1e;border-radius:3px;box-shadow:inset 0 1px 0 #666"></div>
<svg class="a" style="left:210px;top:1058px;" width="15" height="15" viewBox="0 0 15 15"><circle cx="7.5" cy="7.5" r="7" fill="#db4437"/><path d="M7.5 7.5L1.4 11A7 7 0 0 0 11 13.6Z" fill="#0f9d58"/><path d="M7.5 7.5L11 13.6A7 7 0 0 0 14.5 7.5V4Z" fill="#f4b400"/><circle cx="7.5" cy="7.5" r="3.2" fill="#4285f4" stroke="#fff" stroke-width="1.2"/></svg>
<div class="t" style="left:229px;top:1059px;font-size:13px;line-height:15px;color:#fff;transform:none">Входящие - Почт...</div>
<div class="a" style="left:360px;top:1054px;width:158px;height:24px;background:#161616;border:1px solid #000;border-radius:3px;box-shadow:inset 0 0 0 1px #3a3a3a"></div>
<svg class="a" style="left:370px;top:1058px;" width="17" height="17" viewBox="0 0 17 17"><rect x="0.5" y="0.5" width="16" height="16" rx="2.5" fill="#ffff00" stroke="#c8b400"/><path d="M2.5 4.5L4.5 2.5V9.5" stroke="#ee0000" stroke-width="2" fill="none"/><path d="M13 4Q12 2.2 10 2.2Q7.2 2.2 7.2 5.5Q7.2 8.8 10 8.8H15" stroke="#ee0000" stroke-width="2" fill="none"/><path d="M4 11L6 15.5L8 11M10.5 11.2A1.5 1.1 0 1 0 10.6 11.2ZM10.5 13.2A1.6 1.2 0 1 0 10.6 13.2Z" stroke="#b05000" stroke-width="0.9" fill="none"/></svg>
<div class="t" style="left:388px;top:1059px;font-size:13px;line-height:15px;color:#fff;transform:none">1С:Предприятие ...</div>
<div class="a" style="left:521px;top:1055px;width:157px;height:22px;background:linear-gradient(#4e4e4e,#3e3e3e 50%,#333 51%,#2c2c2c);border:1px solid #1e1e1e;border-radius:3px;box-shadow:inset 0 1px 0 #666"></div>
<svg class="a" style="left:531px;top:1058px;" width="17" height="17" viewBox="0 0 17 17"><rect x="0.5" y="0.5" width="16" height="16" rx="2.5" fill="#ffff00" stroke="#c8b400"/><path d="M2.5 4.5L4.5 2.5V9.5" stroke="#ee0000" stroke-width="2" fill="none"/><path d="M13 4Q12 2.2 10 2.2Q7.2 2.2 7.2 5.5Q7.2 8.8 10 8.8H15" stroke="#ee0000" stroke-width="2" fill="none"/><path d="M4 11L6 15.5L8 11M10.5 11.2A1.5 1.1 0 1 0 10.6 11.2ZM10.5 13.2A1.6 1.2 0 1 0 10.6 13.2Z" stroke="#b05000" stroke-width="0.9" fill="none"/></svg>
<div class="t" style="left:549px;top:1059px;font-size:13px;line-height:15px;color:#fff;transform:none">1С:Предприятие ...</div>
<div class="a" style="left:681px;top:1055px;width:157px;height:22px;background:linear-gradient(#4e4e4e,#3e3e3e 50%,#333 51%,#2c2c2c);border:1px solid #1e1e1e;border-radius:3px;box-shadow:inset 0 1px 0 #666"></div>
<svg class="a" style="left:690px;top:1057px;" width="15" height="17" viewBox="0 0 15 17"><path d="M1 2H6L8 4H14V16H1Z" fill="#e8c860"/><path d="M1 4H8L10 6V16H1Z" fill="#f8e088"/></svg>
<div class="t" style="left:709px;top:1059px;font-size:13px;line-height:15px;color:#fff;transform:none">\\Server\папка д...</div>
<div class="a" style="left:841px;top:1055px;width:157px;height:22px;background:linear-gradient(#4e4e4e,#3e3e3e 50%,#333 51%,#2c2c2c);border:1px solid #1e1e1e;border-radius:3px;box-shadow:inset 0 1px 0 #666"></div>
<svg class="a" style="left:851px;top:1058px;" width="16" height="16" viewBox="0 0 16 16"><circle cx="8" cy="8" r="7.5" fill="#ffe070" stroke="#d09000"/><text x="2" y="11" font-family="Liberation Sans" font-weight="bold" font-size="8" fill="#e00000">1C</text></svg>
<div class="t" style="left:869px;top:1059px;font-size:13px;line-height:15px;color:#fff;transform:none">1С:Предприятие ...</div>
<div class="a" style="left:1001px;top:1055px;width:157px;height:22px;background:linear-gradient(#4e4e4e,#3e3e3e 50%,#333 51%,#2c2c2c);border:1px solid #1e1e1e;border-radius:3px;box-shadow:inset 0 1px 0 #666"></div>
<svg class="a" style="left:1010px;top:1058px;" width="16" height="16" viewBox="0 0 16 16"><rect x="0.5" y="0.5" width="15" height="15" fill="#fff" stroke="#c03030"/><rect x="2" y="2" width="12" height="12" fill="#d84040"/><path d="M4 4L12 12M12 4L4 12" stroke="#fff" stroke-width="1.5"/></svg>
<div class="t" style="left:1029px;top:1059px;font-size:13px;line-height:15px;color:#fff;transform:none">Microsoft Office Pi...</div>
<div class="a" style="left:1161px;top:1055px;width:157px;height:22px;background:linear-gradient(#4e4e4e,#3e3e3e 50%,#333 51%,#2c2c2c);border:1px solid #1e1e1e;border-radius:3px;box-shadow:inset 0 1px 0 #666"></div>
<svg class="a" style="left:1170px;top:1057px;" width="17" height="17" viewBox="0 0 17 17"><rect x="1" y="1" width="12" height="13" fill="#fff" stroke="#3060c0"/><path d="M3 14L15 2" stroke="#e03030" stroke-width="1.5"/><rect x="2" y="2" width="7" height="5" fill="#4a7ad0"/></svg>
<div class="t" style="left:1189px;top:1059px;font-size:13px;line-height:15px;color:#fff;transform:none">1.png (84%) - Pai...</div>
<div class="a" style="left:1794px;top:1058px;width:14px;height:16px;background:#c8c8c8"></div>
<div class="t" style="left:1794px;top:1059px;font-size:12px;letter-spacing:-1px;color:#000;line-height:14px;transform:none">RU</div>
<svg class="a" style="left:1813px;top:1058px;" width="16" height="16" viewBox="0 0 16 16"><circle cx="8" cy="8" r="7.5" fill="#333" stroke="#666"/><path d="M9.5 4.5L6 8L9.5 11.5" stroke="#ccc" stroke-width="1.6" fill="none"/></svg>
<svg class="a" style="left:1831px;top:1057px;" width="16" height="17" viewBox="0 0 16 17"><path d="M8 1L11 5L15 3L13 8L16 12L11 11L8 16L6 11L1 12L4 8L1 3L6 5Z" fill="#f07820"/><circle cx="8" cy="8" r="3" fill="#fff"/></svg>
<svg class="a" style="left:1849px;top:1057px;" width="17" height="17" viewBox="0 0 17 17"><rect x="5" y="1" width="11" height="8" fill="#4a8ae0" stroke="#aac"/><rect x="0.5" y="5.5" width="11" height="8" fill="#3a7ad8" stroke="#aac"/><rect x="3" y="14" width="6" height="2" fill="#999"/></svg>
<div class="t" style="left:1874px;top:1058px;font-size:13px;line-height:15px;color:#fff;transform:none">12:08</div>
</body></html>
